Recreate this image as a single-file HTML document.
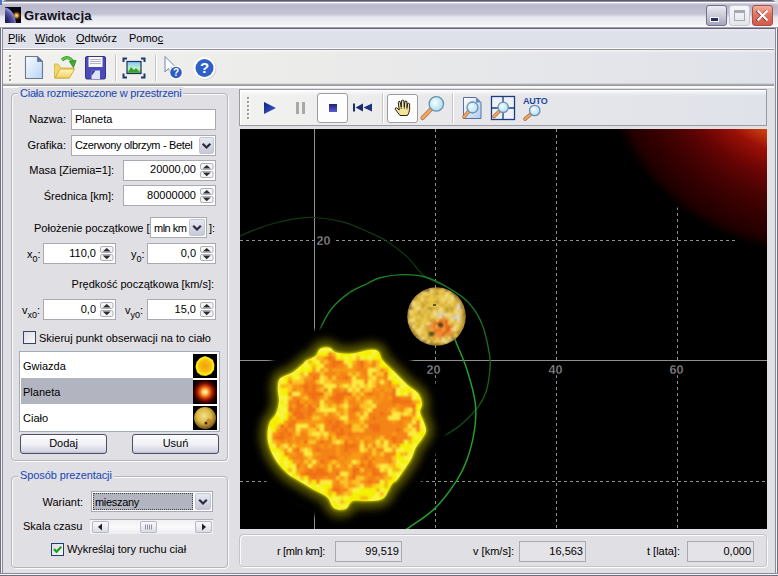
<!DOCTYPE html>
<html><head><meta charset="utf-8">
<style>
*{margin:0;padding:0;box-sizing:border-box}
html,body{width:778px;height:576px;overflow:hidden;background:#e0dfe3}
body{position:relative;font-family:"Liberation Sans",sans-serif;font-size:11px;color:#000}
.a{position:absolute}
.t{position:absolute;white-space:pre;line-height:13px}
u{text-decoration:underline;text-underline-offset:1px}
</style></head><body>

<div class="a" style="left:0;top:0;width:778px;height:29px;border-radius:7px 7px 0 0;background:linear-gradient(#5a5a6a 0,#5a5a6a 1px,#9090a0 1px,#9090a0 2px,#f8f8fc 2px,#f8f8fc 3px,#dcdce6 3px,#b8b8cc 5px,#c4c4d4 14px,#e6e6ee 17px,#f2f2f6 24px,#fafafa 26.5px,#a0a0ae 27.5px,#646474 28px,#646474 29px)"></div>
<svg class="a" style="left:5px;top:7px" width="16" height="16" viewBox="0 0 16 16">
<defs><radialGradient id="tg" cx="11.5" cy="8.5" r="5" gradientUnits="userSpaceOnUse"><stop offset="0" stop-color="#ffe090"/><stop offset="0.35" stop-color="#e09030"/><stop offset="1" stop-color="#100808" stop-opacity="0"/></radialGradient>
<radialGradient id="tp" cx="-6" cy="18" r="18" gradientUnits="userSpaceOnUse"><stop offset="0.5" stop-color="#202058"/><stop offset="0.85" stop-color="#5a5aa8"/><stop offset="1" stop-color="#9090e0"/></radialGradient></defs>
<rect width="16" height="16" fill="#06060e"/><rect width="16" height="16" fill="url(#tg)"/>
<path d="M0 0.5 Q9 2 11 16 L0 16Z" fill="url(#tp)"/></svg>
<div class="a" style="left:0;top:0;width:2px;height:5px;background:#5070c0"></div>
<div class="t" style="left:24px;top:9px;font-size:13px;font-weight:bold;letter-spacing:0.2px;color:#10101a;text-shadow:1px 1px 0 rgba(180,180,200,0.6)">Grawitacja</div>
<div class="a" style="left:706px;top:5px;width:21px;height:21px;border:1px solid #70708a;border-radius:3px;background:linear-gradient(#ececf4,#c4c4d4 60%,#a4a4bc)"></div>
<div class="a" style="left:710px;top:17px;width:9px;height:5px;background:#283060;border:1px solid #f4f4fa"></div>
<div class="a" style="left:729px;top:5px;width:21px;height:21px;border:1px solid #c8c8d2;border-radius:3px;background:linear-gradient(#f6f6fa,#e4e4ec)"></div>
<div class="a" style="left:734px;top:10px;width:11px;height:11px;border:1px solid #a8a8b4;border-top-width:3px"></div>
<div class="a" style="left:752px;top:5px;width:21px;height:21px;border:1px solid #a85048;border-radius:3px;background:linear-gradient(#f4b0a0,#e27462 45%,#d45a48)"></div>
<svg class="a" style="left:752px;top:5px" width="21" height="21" viewBox="0 0 21 21">
<path d="M5.5 5.5 L15.5 15.5 M15.5 5.5 L5.5 15.5" stroke="#602020" stroke-width="2" transform="translate(-0.8,0.2)"/>
<path d="M5.5 5.5 L15.5 15.5 M15.5 5.5 L5.5 15.5" stroke="#fff" stroke-width="2"/></svg>
<div class="a" style="left:3px;top:29px;width:772px;height:20px;background:linear-gradient(#e8e8f2 0,#e2e3ec 2px,#dee1ea 4px,#dee1ea 100%)"></div>
<div class="t" style="left:8px;top:32px;"><u>P</u>lik</div>
<div class="t" style="left:35px;top:32px;"><u>W</u>idok</div>
<div class="t" style="left:76px;top:32px;"><u>O</u>dtwórz</div>
<div class="t" style="left:129px;top:32px;">Pomo<u>c</u></div>
<div class="a" style="left:3px;top:48px;width:771px;height:40px;background:linear-gradient(#fafafa 0,#fafafa 1px,#909096 1px,#909096 2px,rgba(255,255,255,.6) 2px,rgba(255,255,255,0) 5px,rgba(255,255,255,0) 35px,#9a9a9e 37px,#9a9a9e 38px,#fafafa 38px),linear-gradient(90deg,#f2f1ee,#ebebea 40%,#e0e2ea)"></div>
<svg class="a" style="left:9px;top:55px" width="4" height="28" viewBox="0 0 4 28"><defs></defs><rect x="1" y="1" width="2" height="2" fill="#fff"/><rect x="0" y="0" width="2" height="2" fill="#9a9aa0"/><rect x="1" y="5" width="2" height="2" fill="#fff"/><rect x="0" y="4" width="2" height="2" fill="#9a9aa0"/><rect x="1" y="9" width="2" height="2" fill="#fff"/><rect x="0" y="8" width="2" height="2" fill="#9a9aa0"/><rect x="1" y="13" width="2" height="2" fill="#fff"/><rect x="0" y="12" width="2" height="2" fill="#9a9aa0"/><rect x="1" y="17" width="2" height="2" fill="#fff"/><rect x="0" y="16" width="2" height="2" fill="#9a9aa0"/><rect x="1" y="21" width="2" height="2" fill="#fff"/><rect x="0" y="20" width="2" height="2" fill="#9a9aa0"/><rect x="1" y="25" width="2" height="2" fill="#fff"/><rect x="0" y="24" width="2" height="2" fill="#9a9aa0"/></svg>
<svg class="a" style="left:24px;top:55px" width="22" height="26" viewBox="0 0 22 26"><defs><linearGradient id="nd" x1="0" y1="0" x2="1" y2="1"><stop offset="0" stop-color="#fafcff"/><stop offset="1" stop-color="#b8d4f4"/></linearGradient></defs><path d="M1.5 1.5 H13.5 L18.5 6.5 V23.5 H1.5Z" fill="url(#nd)" stroke="#6a7896" stroke-width="1.1"/><path d="M13.5 1.5 V6.5 H18.5Z" fill="#5a70b0" stroke="#5a6a98" stroke-width="0.7"/></svg>
<svg class="a" style="left:53px;top:55px" width="24" height="26" viewBox="0 0 24 26"><defs><linearGradient id="of" x1="0" y1="0" x2="0" y2="1"><stop offset="0" stop-color="#fff6b8"/><stop offset="1" stop-color="#f0d060"/></linearGradient></defs><path d="M1.5 9 L1.5 23 L16 23 L21 13 L8 13 L5 9Z" fill="#f0d868" stroke="#d0b040" stroke-width="0.8"/><path d="M2 23 L7 14 L21.5 14 L16.5 23Z" fill="url(#of)" stroke="#c8a030" stroke-width="0.8"/><path d="M9 5 Q15 -0.5 20 7" fill="none" stroke="#2a8a2a" stroke-width="3.2"/><path d="M9 5 Q15 -0.5 20 7" fill="none" stroke="#60d040" stroke-width="1.8"/><path d="M16.5 6.5 L23 5.5 L20.5 12.5Z" fill="#40b030" stroke="#2a7a2a" stroke-width="0.8"/></svg>
<svg class="a" style="left:85px;top:56px" width="22" height="24" viewBox="0 0 22 24"><defs></defs><path d="M0.5 2 Q0.5 0.5 2 0.5 H19 Q20.5 0.5 20.5 2 V21.5 Q20.5 23 19 23 H2 Q0.5 23 0.5 21.5Z" fill="#4a4ab8" stroke="#34348a" stroke-width="1"/><rect x="3.5" y="1" width="14" height="10" fill="#f8f8fc"/><path d="M5 3.5h11M5 5.5h11M5 7.5h11" stroke="#a0a0c0" stroke-width="0.8"/><rect x="6.5" y="14.5" width="8.5" height="8.5" fill="#e0e4f8"/><path d="M6.5 14.5 h4 L6.5 20Z" fill="#3a3a90"/></svg>
<div class="a" style="left:115px;top:55px;width:2px;height:26px;background:linear-gradient(90deg,#c5c5cb 0,#c5c5cb 1px,#fff 1px)"></div>
<svg class="a" style="left:122px;top:57px" width="24" height="22" viewBox="0 0 24 22"><defs><linearGradient id="fs" x1="0" y1="0" x2="0" y2="1"><stop offset="0" stop-color="#80c8f8"/><stop offset="0.6" stop-color="#c8f0c8"/><stop offset="1" stop-color="#60b840"/></linearGradient></defs><path d="M1.5 5 V1.5 H5 M19 1.5 H22.5 V5 M22.5 16.5 V20.5 H19 M5 20.5 H1.5 V16.5" fill="none" stroke="#1c3a70" stroke-width="2"/><rect x="5" y="4.5" width="14" height="12" fill="url(#fs)" stroke="#1c3060" stroke-width="1.2"/><path d="M6 15.5 L9 10 L12 13 L14 11 L18 15.5Z" fill="#38a030"/></svg>
<div class="a" style="left:155px;top:55px;width:2px;height:26px;background:linear-gradient(90deg,#c5c5cb 0,#c5c5cb 1px,#fff 1px)"></div>
<svg class="a" style="left:163px;top:55px" width="24" height="26" viewBox="0 0 24 26"><defs></defs><path d="M2 1.5 V17 L5.5 13.5 L8.5 20 L11 19 L8 12.5 L13 12.5Z" fill="#fafcff" stroke="#7888a8" stroke-width="1"/><circle cx="13" cy="17.5" r="6.8" fill="#fff"/><circle cx="13" cy="17.5" r="5.8" fill="#2e5cc0"/><text x="13" y="21.3" font-family="Liberation Sans" font-weight="bold" font-size="10" fill="#fff" text-anchor="middle">?</text></svg>
<svg class="a" style="left:192px;top:55px" width="26" height="26" viewBox="0 0 26 26"><defs></defs><circle cx="13.3" cy="13.8" r="11" fill="#b8bcc8" opacity="0.6"/><circle cx="12.5" cy="13" r="11" fill="#fff"/><circle cx="12.5" cy="13" r="9" fill="#2f60c8"/><text x="12.5" y="18.3" font-family="Liberation Sans" font-weight="bold" font-size="15" fill="#fff" text-anchor="middle">?</text></svg>
<div class="a" style="left:0px;top:28px;width:3px;height:548px;background:linear-gradient(90deg,#6f6f80 0,#6f6f80 1px,#f4f4f8 1px,#f4f4f8 2px,#8a8a98 2px)"></div>
<div class="a" style="left:775px;top:28px;width:3px;height:548px;background:linear-gradient(90deg,#8a8a98 0,#8a8a98 1px,#f4f4f8 1px,#f4f4f8 2px,#6f6f80 2px)"></div>
<div class="a" style="left:0px;top:573px;width:778px;height:3px;background:linear-gradient(#8a8a98 0,#8a8a98 1px,#f4f4f8 1px,#f4f4f8 2px,#6f6f80 2px)"></div>
<div class="a" style="left:12px;top:94px;width:217px;height:368px;border:1px solid #fbfbfd;border-radius:4px"></div>
<div class="a" style="left:11px;top:93px;width:217px;height:368px;border:1px solid #b6b4be;border-radius:4px"></div>
<div class="t" style="left:18px;top:87px;padding:0 2px;background:#e0dfe3;color:#1846b4;letter-spacing:-0.24px">Ciała rozmieszczone w przestrzeni</div>
<div class="t" style="right:712px;top:113px;">Nazwa:</div>
<div class="a" style="left:71px;top:109px;width:145px;height:21px;background:#fff;border:1px solid #a9a9b2"></div>
<div class="t" style="left:75px;top:113px;">Planeta</div>
<div class="t" style="right:712px;top:139px;">Grafika:</div>
<div class="a" style="left:71px;top:135px;width:145px;height:21px;background:#fff;border:1px solid #a9a9b2"></div>
<div class="t" style="left:75px;top:139px;letter-spacing:-0.33px">Czerwony olbrzym - Betel</div>
<div class="a" style="left:199px;top:137px;width:15px;height:17px;border:1px solid #c4c6d4;border-radius:2px;background:linear-gradient(#e6e8f2,#c6c8d8)"></div>
<svg class="a" style="left:199px;top:137px" width="15" height="17" viewBox="0 0 15 17"><path d="M3.7 6.7 L7.5 10.5 L11.3 6.7" fill="none" stroke="#2c2c3a" stroke-width="2.2"/></svg>
<div class="t" style="right:664px;top:164px;">Masa [Ziemia=1]:</div>
<div class="a" style="left:123px;top:160px;width:93px;height:21px;background:#fff;border:1px solid #a9a9b2"></div>
<div class="t" style="right:582px;top:163px;">20000,00</div>
<svg class="a" style="left:200px;top:163px" width="14" height="15" viewBox="0 0 14 15"><rect x="0.5" y="0.5" width="12.5" height="6" rx="1.5" fill="#f4f4f6" stroke="#a6a6ae" stroke-width="0.9"/><rect x="0.5" y="8.5" width="12.5" height="6" rx="1.5" fill="#f4f4f6" stroke="#a6a6ae" stroke-width="0.9"/><path d="M2.8 5.6 L6.75 2 L10.7 5.6Z" fill="#2a2a30"/><path d="M2.8 9.6 L6.75 13.2 L10.7 9.6Z" fill="#2a2a30"/></svg>
<div class="t" style="right:664px;top:190px;">Średnica [km]:</div>
<div class="a" style="left:123px;top:185px;width:93px;height:21px;background:#fff;border:1px solid #a9a9b2"></div>
<div class="t" style="right:582px;top:189px;">80000000</div>
<svg class="a" style="left:200px;top:188px" width="14" height="15" viewBox="0 0 14 15"><rect x="0.5" y="0.5" width="12.5" height="6" rx="1.5" fill="#f4f4f6" stroke="#a6a6ae" stroke-width="0.9"/><rect x="0.5" y="8.5" width="12.5" height="6" rx="1.5" fill="#f4f4f6" stroke="#a6a6ae" stroke-width="0.9"/><path d="M2.8 5.6 L6.75 2 L10.7 5.6Z" fill="#2a2a30"/><path d="M2.8 9.6 L6.75 13.2 L10.7 9.6Z" fill="#2a2a30"/></svg>
<div class="t" style="left:34px;top:222px;">Położenie początkowe [</div>
<div class="a" style="left:150px;top:217px;width:57px;height:21px;background:#fff;border:1px solid #a9a9b2"></div>
<div class="t" style="left:154px;top:222px;letter-spacing:-0.5px">mln km</div>
<div class="a" style="left:189px;top:219px;width:16px;height:17px;border:1px solid #c4c6d4;border-radius:2px;background:linear-gradient(#e6e8f2,#c6c8d8)"></div>
<svg class="a" style="left:189px;top:219px" width="16" height="17" viewBox="0 0 16 17"><path d="M4.2 6.7 L8.0 10.5 L11.8 6.7" fill="none" stroke="#2c2c3a" stroke-width="2.2"/></svg>
<div class="t" style="left:209px;top:222px;">]:</div>
<div class="t" style="left:27px;top:248px;">x<sub style="font-size:9px;vertical-align:-4px;line-height:0">0</sub>:</div>
<div class="a" style="left:43px;top:243px;width:73px;height:21px;background:#fff;border:1px solid #a9a9b2"></div>
<div class="t" style="right:682px;top:247px;">110,0</div>
<svg class="a" style="left:100px;top:246px" width="14" height="15" viewBox="0 0 14 15"><rect x="0.5" y="0.5" width="12.5" height="6" rx="1.5" fill="#f4f4f6" stroke="#a6a6ae" stroke-width="0.9"/><rect x="0.5" y="8.5" width="12.5" height="6" rx="1.5" fill="#f4f4f6" stroke="#a6a6ae" stroke-width="0.9"/><path d="M2.8 5.6 L6.75 2 L10.7 5.6Z" fill="#2a2a30"/><path d="M2.8 9.6 L6.75 13.2 L10.7 9.6Z" fill="#2a2a30"/></svg>
<div class="t" style="left:131px;top:248px;">y<sub style="font-size:9px;vertical-align:-4px;line-height:0">0</sub>:</div>
<div class="a" style="left:147px;top:243px;width:69px;height:21px;background:#fff;border:1px solid #a9a9b2"></div>
<div class="t" style="right:582px;top:247px;">0,0</div>
<svg class="a" style="left:200px;top:246px" width="14" height="15" viewBox="0 0 14 15"><rect x="0.5" y="0.5" width="12.5" height="6" rx="1.5" fill="#f4f4f6" stroke="#a6a6ae" stroke-width="0.9"/><rect x="0.5" y="8.5" width="12.5" height="6" rx="1.5" fill="#f4f4f6" stroke="#a6a6ae" stroke-width="0.9"/><path d="M2.8 5.6 L6.75 2 L10.7 5.6Z" fill="#2a2a30"/><path d="M2.8 9.6 L6.75 13.2 L10.7 9.6Z" fill="#2a2a30"/></svg>
<div class="t" style="right:564px;top:278px;">Prędkość początkowa [km/s]:</div>
<div class="t" style="left:22px;top:304px;">v<sub style="font-size:9px;vertical-align:-4px;line-height:0">x0</sub>:</div>
<div class="a" style="left:43px;top:299px;width:73px;height:21px;background:#fff;border:1px solid #a9a9b2"></div>
<div class="t" style="right:682px;top:303px;">0,0</div>
<svg class="a" style="left:100px;top:302px" width="14" height="15" viewBox="0 0 14 15"><rect x="0.5" y="0.5" width="12.5" height="6" rx="1.5" fill="#f4f4f6" stroke="#a6a6ae" stroke-width="0.9"/><rect x="0.5" y="8.5" width="12.5" height="6" rx="1.5" fill="#f4f4f6" stroke="#a6a6ae" stroke-width="0.9"/><path d="M2.8 5.6 L6.75 2 L10.7 5.6Z" fill="#2a2a30"/><path d="M2.8 9.6 L6.75 13.2 L10.7 9.6Z" fill="#2a2a30"/></svg>
<div class="t" style="left:125px;top:304px;">v<sub style="font-size:9px;vertical-align:-4px;line-height:0">y0</sub>:</div>
<div class="a" style="left:147px;top:299px;width:69px;height:21px;background:#fff;border:1px solid #a9a9b2"></div>
<div class="t" style="right:582px;top:303px;">15,0</div>
<svg class="a" style="left:200px;top:302px" width="14" height="15" viewBox="0 0 14 15"><rect x="0.5" y="0.5" width="12.5" height="6" rx="1.5" fill="#f4f4f6" stroke="#a6a6ae" stroke-width="0.9"/><rect x="0.5" y="8.5" width="12.5" height="6" rx="1.5" fill="#f4f4f6" stroke="#a6a6ae" stroke-width="0.9"/><path d="M2.8 5.6 L6.75 2 L10.7 5.6Z" fill="#2a2a30"/><path d="M2.8 9.6 L6.75 13.2 L10.7 9.6Z" fill="#2a2a30"/></svg>
<div class="a" style="left:23px;top:331px;width:13px;height:13px;border:1px solid #3a4660;background:linear-gradient(135deg,#dcdce4,#fafafa)"></div>
<div class="t" style="left:39px;top:332px;">Skieruj punkt obserwacji na to ciało</div>
<div class="a" style="left:19px;top:351px;width:201px;height:81px;background:#fff;border:1px solid #a4acbc"></div>
<div class="a" style="left:21px;top:378px;width:172px;height:26px;background:#b2b4bf"></div>
<div class="t" style="left:23px;top:360px;">Gwiazda</div>
<div class="t" style="left:23px;top:386px;">Planeta</div>
<div class="t" style="left:23px;top:412px;">Ciało</div>
<svg class="a" style="left:193px;top:354px" width="24" height="76" viewBox="0 0 24 76"><defs><radialGradient id="li1" cx="12" cy="12" r="10" gradientUnits="userSpaceOnUse"><stop offset="0" stop-color="#f0a010"/><stop offset="0.6" stop-color="#f8c010"/><stop offset="0.85" stop-color="#ffee20"/><stop offset="1" stop-color="#c8c000"/></radialGradient><radialGradient id="li2" cx="12" cy="38" r="13" gradientUnits="userSpaceOnUse"><stop offset="0" stop-color="#fffce0"/><stop offset="0.18" stop-color="#ffd060"/><stop offset="0.4" stop-color="#e85a10"/><stop offset="0.65" stop-color="#801000"/><stop offset="0.85" stop-color="#300000"/><stop offset="1" stop-color="#080000"/></radialGradient><radialGradient id="li3" cx="11" cy="62" r="12" gradientUnits="userSpaceOnUse"><stop offset="0" stop-color="#f0e090"/><stop offset="0.6" stop-color="#dcb840"/><stop offset="1" stop-color="#806020"/></radialGradient><filter id="lb"><feGaussianBlur stdDeviation="0.6"/></filter></defs><rect x="0" y="0" width="24" height="24" fill="#000"/><path d="M12 2 L16 3.5 L20 6 L21.5 11 L21 16 L18 20 L13 22 L8 21.5 L4 18.5 L2.5 13 L3.5 8 L7 4Z" fill="url(#li1)" filter="url(#lb)"/><rect x="0" y="26" width="24" height="24" fill="url(#li2)"/><rect x="0" y="52" width="24" height="24" fill="#000"/><circle cx="12" cy="64" r="11" fill="url(#li3)"/><circle cx="13" cy="69" r="1.5" fill="#402010"/><circle cx="16" cy="67" r="2.5" fill="#c07030" opacity="0.7"/></svg>
<div class="a" style="left:20px;top:434px;width:87px;height:20px;border:1px solid #4a4e68;border-radius:3px;background:linear-gradient(#fdfdfe,#f0f0f6 50%,#d6d6e4 90%,#b8b8cc)"></div>
<div class="t" style="left:20px;top:437px;width:87px;text-align:center">Dodaj</div>
<div class="a" style="left:132px;top:434px;width:87px;height:20px;border:1px solid #4a4e68;border-radius:3px;background:linear-gradient(#fdfdfe,#f0f0f6 50%,#d6d6e4 90%,#b8b8cc)"></div>
<div class="t" style="left:132px;top:437px;width:87px;text-align:center">Usuń</div>
<div class="a" style="left:12px;top:477px;width:217px;height:92px;border:1px solid #fbfbfd;border-radius:4px"></div>
<div class="a" style="left:11px;top:476px;width:217px;height:92px;border:1px solid #b6b4be;border-radius:4px"></div>
<div class="t" style="left:18px;top:469px;padding:0 2px;background:#e0dfe3;color:#1846b4;letter-spacing:-0.1px">Sposób prezentacji</div>
<div class="t" style="right:695px;top:496px;">Wariant:</div>
<div class="a" style="left:91px;top:491px;width:122px;height:21px;background:#fff;border:1px solid #a9a9b2"></div>
<div class="a" style="left:93px;top:493px;width:100px;height:17px;background:#b2b4bf;border:1px dotted #404048"></div>
<div class="t" style="left:95px;top:496px;letter-spacing:-0.3px">mieszany</div>
<div class="a" style="left:195px;top:493px;width:16px;height:17px;border:1px solid #c4c6d4;border-radius:2px;background:linear-gradient(#e6e8f2,#c6c8d8)"></div>
<svg class="a" style="left:195px;top:493px" width="16" height="17" viewBox="0 0 16 17"><path d="M4.2 6.7 L8.0 10.5 L11.8 6.7" fill="none" stroke="#2c2c3a" stroke-width="2.2"/></svg>
<div class="t" style="left:23px;top:520px;">Skala czasu</div>
<div class="a" style="left:90px;top:519px;width:123px;height:15px;border-top:1px solid #b0b0b8;background:linear-gradient(#f0f0f4,#fafafc 50%,#ececf2)"></div>
<div class="a" style="left:92px;top:521px;width:17px;height:12px;border:1px solid #b8b8c4;border-radius:2px;background:linear-gradient(#fafafc,#dcdce6)"></div>
<div class="a" style="left:195px;top:521px;width:17px;height:12px;border:1px solid #b8b8c4;border-radius:2px;background:linear-gradient(#fafafc,#dcdce6)"></div>
<svg class="a" style="left:92px;top:521px" width="17" height="12"><path d="M6 6 L10 2.5 L10 9.5Z" fill="#202028"/></svg>
<svg class="a" style="left:195px;top:521px" width="17" height="12"><path d="M11 6 L7 2.5 L7 9.5Z" fill="#202028"/></svg>
<div class="a" style="left:140px;top:521px;width:17px;height:12px;border:1px solid #b8b8c4;border-radius:2px;background:linear-gradient(#fafafc,#dcdce6)"></div>
<svg class="a" style="left:140px;top:521px" width="17" height="12"><path d="M5.5 3.5v5M7.5 3.5v5M9.5 3.5v5M11.5 3.5v5" stroke="#9090a0" stroke-width="1"/></svg>
<div class="a" style="left:51px;top:543px;width:13px;height:13px;border:1px solid #1c3f6e;background:linear-gradient(135deg,#dcdce4,#fafafa)"></div>
<svg class="a" style="left:51px;top:543px" width="13" height="13"><path d="M3 6 L5.5 8.8 L10.3 3.8" fill="none" stroke="#21a121" stroke-width="2.2"/></svg>
<div class="t" style="left:67px;top:543px;">Wykreślaj tory ruchu ciał</div>
<div class="a" style="left:239px;top:89px;width:528px;height:37px;border:1px solid #9a9aa2;box-shadow:inset 1px 1px 0 #fff;background:linear-gradient(rgba(255,255,255,.8) 0,rgba(255,255,255,0) 6px),linear-gradient(90deg,#f2f2f0,#e8e8ea 40%,#e0e2ea)"></div>
<svg class="a" style="left:247px;top:97px" width="4" height="24" viewBox="0 0 4 24"><defs></defs><rect x="1" y="1" width="2" height="2" fill="#fff"/><rect x="0" y="0" width="2" height="2" fill="#9a9aa0"/><rect x="1" y="5" width="2" height="2" fill="#fff"/><rect x="0" y="4" width="2" height="2" fill="#9a9aa0"/><rect x="1" y="9" width="2" height="2" fill="#fff"/><rect x="0" y="8" width="2" height="2" fill="#9a9aa0"/><rect x="1" y="13" width="2" height="2" fill="#fff"/><rect x="0" y="12" width="2" height="2" fill="#9a9aa0"/><rect x="1" y="17" width="2" height="2" fill="#fff"/><rect x="0" y="16" width="2" height="2" fill="#9a9aa0"/><rect x="1" y="21" width="2" height="2" fill="#fff"/><rect x="0" y="20" width="2" height="2" fill="#9a9aa0"/></svg>
<svg class="a" style="left:262px;top:100px" width="16" height="16" viewBox="0 0 16 16"><defs><linearGradient id="pl" x1="0" y1="0" x2="1" y2="1"><stop offset="0" stop-color="#102080"/><stop offset="1" stop-color="#4060d0"/></linearGradient></defs><path d="M2 2 L14 8 L2 14Z" fill="url(#pl)"/></svg>
<div class="a" style="left:296px;top:102px;width:3px;height:12px;background:#a8a8a8"></div>
<div class="a" style="left:302px;top:102px;width:3px;height:12px;background:#a8a8a8"></div>
<div class="a" style="left:317px;top:93px;width:31px;height:30px;border:1px solid #9c9ca4;border-radius:3px;background:#fdfdfd"></div>
<div class="a" style="left:329px;top:104px;width:8px;height:8px;background:linear-gradient(#1c2470,#5a5ad8)"></div>
<svg class="a" style="left:352px;top:103px" width="22" height="10" viewBox="0 0 22 10"><defs></defs><rect x="1" y="0.5" width="2" height="8" fill="#1c2c70"/><path d="M3.5 4.5 L11 0.5 V8.5Z" fill="#1c2c70"/><path d="M11.5 4.5 L20 0.5 V8.5Z" fill="#1c3080"/></svg>
<div class="a" style="left:382px;top:93px;width:2px;height:30px;background:linear-gradient(90deg,#c5c5cb 0,#c5c5cb 1px,#fff 1px)"></div>
<div class="a" style="left:387px;top:94px;width:31px;height:29px;border:1px solid #9c9ca4;border-radius:3px;background:#fdfdfd"></div>
<svg class="a" style="left:394px;top:99px" width="18" height="18" viewBox="0 0 18 18"><defs></defs><path d="M6 16.5 L1.2 10.2 Q0.8 8.6 2.6 8.8 L5.2 11 L4.3 3.4 Q4.6 1.9 6 2.4 L7.2 8 L7.6 1.6 Q8.8 0.6 9.9 1.6 L10.3 8 L10.9 2.4 Q12 1.6 13 2.6 L13 8.6 L13.6 4.6 Q14.6 3.9 15.6 4.8 L15.6 10.5 Q15.2 14 13.4 16.5Z" fill="#f6e49a" stroke="#141414" stroke-width="0.95" stroke-linejoin="round"/><path d="M7.2 8 V10 M10.3 8 V10 M13 8.6 V10.5" stroke="#141414" stroke-width="0.7"/></svg>
<svg class="a" style="left:418px;top:94px" width="30" height="28" viewBox="0 0 30 28"><defs><radialGradient id="lg" cx="0.4" cy="0.4" r="0.7"><stop offset="0" stop-color="#f4fcff"/><stop offset="1" stop-color="#a8d8f0"/></radialGradient></defs><path d="M13.8 14.4 L4.5 24" stroke="#b8703a" stroke-width="4.2" stroke-linecap="round"/><path d="M13.8 14.4 L4.5 24" stroke="#f0a868" stroke-width="2.6" stroke-linecap="round"/><circle cx="18.3" cy="9.9" r="7.2" fill="url(#lg)" stroke="#6890b0" stroke-width="1.3"/></svg>
<div class="a" style="left:452px;top:93px;width:2px;height:30px;background:linear-gradient(90deg,#c5c5cb 0,#c5c5cb 1px,#fff 1px)"></div>
<svg class="a" style="left:461px;top:95px" width="24" height="26" viewBox="0 0 24 26"><defs><radialGradient id="lg" cx="0.4" cy="0.4" r="0.7"><stop offset="0" stop-color="#f4fcff"/><stop offset="1" stop-color="#a8d8f0"/></radialGradient><linearGradient id="zp" x1="0" y1="0" x2="1" y2="1"><stop offset="0" stop-color="#fff"/><stop offset="1" stop-color="#b0ccf0"/></linearGradient></defs><path d="M2.5 2.5 H15 L20 7.5 V23.5 H2.5Z" fill="url(#zp)" stroke="#5870a0" stroke-width="1"/><path d="M15 2.5 V7.5 H20Z" fill="#6a80c0"/><path d="M8.1 15.9 L3 22" stroke="#b8703a" stroke-width="3.6" stroke-linecap="round"/><path d="M8.1 15.9 L3 22" stroke="#f0a868" stroke-width="2.0" stroke-linecap="round"/><circle cx="11.5" cy="12.5" r="5.5" fill="url(#lg)" stroke="#6890b0" stroke-width="1.3"/></svg>
<svg class="a" style="left:490px;top:95px" width="26" height="26" viewBox="0 0 26 26"><defs><radialGradient id="lg" cx="0.4" cy="0.4" r="0.7"><stop offset="0" stop-color="#f4fcff"/><stop offset="1" stop-color="#a8d8f0"/></radialGradient></defs><rect x="1.5" y="1.5" width="23" height="23" fill="#eef2f8" stroke="#1c3c80" stroke-width="1.3"/><path d="M13 1.5 V24.5 M1.5 13 H24.5" stroke="#1c3c80" stroke-width="1.3"/><path d="M10.0 15.5 L4 21.5" stroke="#b8703a" stroke-width="3.6" stroke-linecap="round"/><path d="M10.0 15.5 L4 21.5" stroke="#f0a868" stroke-width="2.0" stroke-linecap="round"/><circle cx="13.2" cy="12.3" r="5.2" fill="url(#lg)" stroke="#6890b0" stroke-width="1.3"/></svg>
<div class="t" style="left:523px;top:96px;font-size:9px;font-weight:bold;color:#1c48a0;line-height:10px;letter-spacing:-0.2px">AUTO</div>
<svg class="a" style="left:520px;top:100px" width="24" height="22" viewBox="0 0 24 22"><defs><radialGradient id="lg" cx="0.4" cy="0.4" r="0.7"><stop offset="0" stop-color="#f4fcff"/><stop offset="1" stop-color="#a8d8f0"/></radialGradient></defs><path d="M11.5 13.7 L5 19" stroke="#b8703a" stroke-width="3.6" stroke-linecap="round"/><path d="M11.5 13.7 L5 19" stroke="#f0a868" stroke-width="2.0" stroke-linecap="round"/><circle cx="14.7" cy="10.5" r="5.2" fill="url(#lg)" stroke="#6890b0" stroke-width="1.3"/></svg>
<div class="a" style="left:240px;top:129px;width:527px;height:400px;background:#000;overflow:hidden" id="cv"><svg class="a" style="left:0;top:0" width="527" height="400" viewBox="240 129 527 400">
<defs>
<radialGradient id="rg" cx="810" cy="41" r="213" gradientUnits="userSpaceOnUse"><stop offset="0" stop-color="#ffb040"/><stop offset="0.35" stop-color="#f07a20"/><stop offset="0.46" stop-color="#d04410"/><stop offset="0.55" stop-color="#9a1006"/><stop offset="0.66" stop-color="#680404"/><stop offset="0.76" stop-color="#480202"/><stop offset="0.86" stop-color="#320000"/><stop offset="0.94" stop-color="#220000"/><stop offset="0.978" stop-color="#0c0000"/><stop offset="1" stop-color="#000"/></radialGradient>
<radialGradient id="sg" cx="347" cy="428" r="95" gradientUnits="userSpaceOnUse"><stop offset="0.75" stop-color="#3a3000"/><stop offset="0.87" stop-color="#181400"/><stop offset="1" stop-color="#000" stop-opacity="0"/></radialGradient>
<filter id="bl1" x="-20%" y="-20%" width="140%" height="140%"><feGaussianBlur stdDeviation="1.6"/></filter>
<filter id="bl2" x="-20%" y="-20%" width="140%" height="140%"><feGaussianBlur stdDeviation="1.3"/></filter>
<radialGradient id="pg" cx="428" cy="306" r="34" gradientUnits="userSpaceOnUse"><stop offset="0" stop-color="#e8d890"/><stop offset="0.5" stop-color="#d8b860"/><stop offset="0.85" stop-color="#b08838"/><stop offset="1" stop-color="#705020"/></radialGradient>
<clipPath id="pc"><circle cx="436.5" cy="316.5" r="29.3"/></clipPath>
<filter id="bl4" x="-20%" y="-20%" width="140%" height="140%"><feGaussianBlur stdDeviation="2"/></filter>
<filter id="bl3" x="-30%" y="-30%" width="160%" height="160%"><feGaussianBlur stdDeviation="4"/></filter>
</defs>
<line x1="435.5" y1="129" x2="435.5" y2="529" stroke="#909090" stroke-width="1" stroke-dasharray="3 3"/>
<line x1="556.5" y1="129" x2="556.5" y2="529" stroke="#909090" stroke-width="1" stroke-dasharray="3 3"/>
<line x1="677.5" y1="129" x2="677.5" y2="529" stroke="#909090" stroke-width="1" stroke-dasharray="3 3"/>
<line x1="240" y1="240.5" x2="767" y2="240.5" stroke="#909090" stroke-width="1" stroke-dasharray="3 3"/>
<line x1="240" y1="481.5" x2="767" y2="481.5" stroke="#909090" stroke-width="1" stroke-dasharray="3 3"/>
<line x1="314.5" y1="129" x2="314.5" y2="529" stroke="#909090"/>
<line x1="240" y1="360.5" x2="767" y2="360.5" stroke="#909090"/>
<circle cx="810" cy="41" r="213" fill="url(#rg)" />
<g font-family="Liberation Sans" font-weight="bold" font-size="12.5" fill="#969696" stroke="#000" stroke-width="0.4">
<rect x="316" y="234" width="17" height="12" fill="#000"/>
<text x="316.6" y="244.8">20</text>
<rect x="426" y="363" width="17" height="12" fill="#000"/>
<text x="426.6" y="373.8">20</text>
<rect x="548" y="363" width="17" height="12" fill="#000"/>
<text x="548.6" y="373.8">40</text>
<rect x="669" y="363" width="17" height="12" fill="#000"/>
<text x="669.6" y="373.8">60</text>
</g>
<path d="M230.0 241.0 C231.7 240.2 234.1 238.6 240.0 236.0 C245.9 233.4 257.1 228.5 265.7 225.7 C274.3 222.9 283.3 220.7 291.4 219.3 C299.5 217.9 305.9 217.1 314.5 217.5 C323.1 217.9 333.8 219.5 342.8 221.9 C351.8 224.3 361.2 228.9 368.5 232.1 C375.8 235.3 380.1 237.0 386.5 241.1 C392.9 245.2 400.9 251.0 407.0 256.6 C413.1 262.2 417.5 270.4 423.0 275.0 C428.5 279.6 437.2 282.5 440.0 284.0" fill="none" stroke="#113a13" stroke-width="1.2"/>
<path d="M315.6 341.2 C316.6 338.6 319.0 331.1 321.7 325.6" fill="none" stroke="#1c8426" stroke-width="1.4"/>
<path d="M321.7 325.6 C324.4 320.1 327.4 313.7 332.0 308.2" fill="none" stroke="#1c8426" stroke-width="1.4"/>
<path d="M332.0 308.2 C336.6 302.7 343.6 296.7 349.4 292.6" fill="none" stroke="#1c8426" stroke-width="1.4"/>
<path d="M349.4 292.6 C355.2 288.6 361.7 286.4 366.8 283.9" fill="none" stroke="#1c8426" stroke-width="1.4"/>
<path d="M366.8 283.9 C371.9 281.4 374.1 279.4 380.0 277.8" fill="none" stroke="#1c8426" stroke-width="1.4"/>
<path d="M380.0 277.8 C385.9 276.2 394.5 274.7 402.0 274.6" fill="none" stroke="#1c8426" stroke-width="1.4"/>
<path d="M402.0 274.6 C409.5 274.5 417.5 274.9 425.0 277.0" fill="none" stroke="#1c8426" stroke-width="1.4"/>
<path d="M425.0 277.0 C432.5 279.1 439.8 282.8 447.0 287.0" fill="none" stroke="#1c8024" stroke-width="1.4"/>
<path d="M447.0 287.0 C454.2 291.2 462.2 295.8 468.0 302.0" fill="none" stroke="#1a7a22" stroke-width="1.4"/>
<path d="M468.0 302.0 C473.8 308.2 478.4 315.2 482.0 324.0" fill="none" stroke="#1a7420" stroke-width="1.4"/>
<path d="M482.0 324.0 C485.6 332.8 488.3 347.2 489.6 355.0" fill="none" stroke="#186e20" stroke-width="1.4"/>
<path d="M489.6 355.0 C490.9 362.8 490.4 364.8 489.8 371.0" fill="none" stroke="#18661e" stroke-width="1.4"/>
<path d="M489.8 371.0 C489.2 377.2 487.9 386.1 486.0 392.0" fill="none" stroke="#165e1c" stroke-width="1.4"/>
<path d="M486.0 392.0 C484.1 397.9 482.0 401.7 478.3 406.7" fill="none" stroke="#15561a" stroke-width="1.4"/>
<path d="M478.3 406.7 C474.6 411.7 468.5 417.8 464.0 422.0" fill="none" stroke="#145018" stroke-width="1.4"/>
<path d="M464.0 422.0 C459.5 426.2 456.0 428.7 451.2 431.7" fill="none" stroke="#134a17" stroke-width="1.4"/>
<path d="M451.2 431.7 C446.5 434.7 438.2 438.6 435.6 440.0" fill="none" stroke="#124416" stroke-width="1.4"/>
<path d="M452.0 330.0 C452.7 332.0 453.5 335.4 456.0 342.0 C458.5 348.6 463.7 359.3 466.9 369.4 C470.1 379.5 473.9 392.4 475.2 402.5 C476.5 412.6 475.9 420.4 474.5 430.0 C473.1 439.6 469.9 451.5 466.9 460.0 C463.9 468.5 461.6 473.1 456.4 481.1 C451.1 489.1 443.4 500.1 435.4 507.9 C427.4 515.7 415.3 523.2 408.6 527.9 C401.9 532.6 397.3 534.6 395.0 536.0" fill="none" stroke="#22a02c" stroke-width="1.5"/>
<circle cx="347" cy="428" r="95" fill="url(#sg)"/>
<path d="M303.0 364.0 C305.3 362.0 304.2 361.8 306.3 360.5 C308.4 359.2 313.3 357.9 315.6 356.0 C317.9 354.1 317.7 350.3 320.0 348.9 C322.3 347.5 326.7 347.1 329.4 347.7 C332.1 348.3 332.5 351.4 336.4 352.4 C340.3 353.4 347.2 353.9 352.6 353.5 C358.0 353.1 364.6 350.4 368.8 350.0 C373.0 349.6 375.7 349.4 378.0 351.2 C380.3 352.9 379.9 356.9 382.7 360.5 C385.5 364.1 390.9 368.4 395.0 372.5 C399.1 376.6 403.7 381.5 407.5 385.0 C411.3 388.5 415.6 390.2 418.0 393.3 C420.4 396.4 421.7 400.6 422.0 403.8 C422.3 406.9 419.7 408.9 420.0 412.0 C420.3 415.1 423.0 419.3 424.0 422.5 C425.0 425.7 426.3 428.2 426.0 431.0 C425.7 433.8 423.7 436.2 422.0 439.0 C420.3 441.8 417.5 444.3 415.8 447.5 C414.1 450.7 413.4 454.6 411.7 458.0 C410.0 461.4 407.8 464.3 405.4 468.0 C402.9 471.7 399.2 477.3 397.0 480.0 C394.8 482.7 394.4 480.9 392.0 484.0 C389.6 487.1 386.9 495.9 382.7 498.7 C378.4 501.5 371.5 500.6 366.5 501.0 C361.5 501.4 356.1 499.7 352.6 501.0 C349.1 502.3 348.7 507.8 345.6 509.0 C342.5 510.2 337.1 510.0 334.0 508.0 C330.9 506.0 330.5 500.1 327.0 497.0 C323.5 493.9 317.4 491.8 313.2 489.4 C309.0 487.0 305.9 485.1 301.7 482.5 C297.5 479.9 292.1 477.4 288.0 474.0 C283.9 470.6 280.1 466.4 277.0 462.0 C273.9 457.6 271.2 452.0 269.6 447.5 C268.0 443.0 267.5 439.2 267.5 435.0 C267.5 430.8 268.2 426.0 269.6 422.5 C271.0 419.0 274.2 417.5 275.8 414.0 C277.4 410.5 278.6 405.9 279.0 401.7 C279.4 397.5 277.7 392.8 277.9 389.0 C278.1 385.2 277.6 381.5 280.0 378.8 C282.4 376.0 288.7 375.0 292.5 372.5 C296.3 370.0 300.7 366.0 303.0 364.0Z" fill="#000" stroke="#000" stroke-width="40" stroke-linejoin="round" filter="url(#bl1)"/>
<path d="M303.0 364.0 C305.3 362.0 304.2 361.8 306.3 360.5 C308.4 359.2 313.3 357.9 315.6 356.0 C317.9 354.1 317.7 350.3 320.0 348.9 C322.3 347.5 326.7 347.1 329.4 347.7 C332.1 348.3 332.5 351.4 336.4 352.4 C340.3 353.4 347.2 353.9 352.6 353.5 C358.0 353.1 364.6 350.4 368.8 350.0 C373.0 349.6 375.7 349.4 378.0 351.2 C380.3 352.9 379.9 356.9 382.7 360.5 C385.5 364.1 390.9 368.4 395.0 372.5 C399.1 376.6 403.7 381.5 407.5 385.0 C411.3 388.5 415.6 390.2 418.0 393.3 C420.4 396.4 421.7 400.6 422.0 403.8 C422.3 406.9 419.7 408.9 420.0 412.0 C420.3 415.1 423.0 419.3 424.0 422.5 C425.0 425.7 426.3 428.2 426.0 431.0 C425.7 433.8 423.7 436.2 422.0 439.0 C420.3 441.8 417.5 444.3 415.8 447.5 C414.1 450.7 413.4 454.6 411.7 458.0 C410.0 461.4 407.8 464.3 405.4 468.0 C402.9 471.7 399.2 477.3 397.0 480.0 C394.8 482.7 394.4 480.9 392.0 484.0 C389.6 487.1 386.9 495.9 382.7 498.7 C378.4 501.5 371.5 500.6 366.5 501.0 C361.5 501.4 356.1 499.7 352.6 501.0 C349.1 502.3 348.7 507.8 345.6 509.0 C342.5 510.2 337.1 510.0 334.0 508.0 C330.9 506.0 330.5 500.1 327.0 497.0 C323.5 493.9 317.4 491.8 313.2 489.4 C309.0 487.0 305.9 485.1 301.7 482.5 C297.5 479.9 292.1 477.4 288.0 474.0 C283.9 470.6 280.1 466.4 277.0 462.0 C273.9 457.6 271.2 452.0 269.6 447.5 C268.0 443.0 267.5 439.2 267.5 435.0 C267.5 430.8 268.2 426.0 269.6 422.5 C271.0 419.0 274.2 417.5 275.8 414.0 C277.4 410.5 278.6 405.9 279.0 401.7 C279.4 397.5 277.7 392.8 277.9 389.0 C278.1 385.2 277.6 381.5 280.0 378.8 C282.4 376.0 288.7 375.0 292.5 372.5 C296.3 370.0 300.7 366.0 303.0 364.0Z" fill="none" stroke="#4a4600" stroke-width="16" filter="url(#bl3)"/>
<path d="M303.0 364.0 C305.3 362.0 304.2 361.8 306.3 360.5 C308.4 359.2 313.3 357.9 315.6 356.0 C317.9 354.1 317.7 350.3 320.0 348.9 C322.3 347.5 326.7 347.1 329.4 347.7 C332.1 348.3 332.5 351.4 336.4 352.4 C340.3 353.4 347.2 353.9 352.6 353.5 C358.0 353.1 364.6 350.4 368.8 350.0 C373.0 349.6 375.7 349.4 378.0 351.2 C380.3 352.9 379.9 356.9 382.7 360.5 C385.5 364.1 390.9 368.4 395.0 372.5 C399.1 376.6 403.7 381.5 407.5 385.0 C411.3 388.5 415.6 390.2 418.0 393.3 C420.4 396.4 421.7 400.6 422.0 403.8 C422.3 406.9 419.7 408.9 420.0 412.0 C420.3 415.1 423.0 419.3 424.0 422.5 C425.0 425.7 426.3 428.2 426.0 431.0 C425.7 433.8 423.7 436.2 422.0 439.0 C420.3 441.8 417.5 444.3 415.8 447.5 C414.1 450.7 413.4 454.6 411.7 458.0 C410.0 461.4 407.8 464.3 405.4 468.0 C402.9 471.7 399.2 477.3 397.0 480.0 C394.8 482.7 394.4 480.9 392.0 484.0 C389.6 487.1 386.9 495.9 382.7 498.7 C378.4 501.5 371.5 500.6 366.5 501.0 C361.5 501.4 356.1 499.7 352.6 501.0 C349.1 502.3 348.7 507.8 345.6 509.0 C342.5 510.2 337.1 510.0 334.0 508.0 C330.9 506.0 330.5 500.1 327.0 497.0 C323.5 493.9 317.4 491.8 313.2 489.4 C309.0 487.0 305.9 485.1 301.7 482.5 C297.5 479.9 292.1 477.4 288.0 474.0 C283.9 470.6 280.1 466.4 277.0 462.0 C273.9 457.6 271.2 452.0 269.6 447.5 C268.0 443.0 267.5 439.2 267.5 435.0 C267.5 430.8 268.2 426.0 269.6 422.5 C271.0 419.0 274.2 417.5 275.8 414.0 C277.4 410.5 278.6 405.9 279.0 401.7 C279.4 397.5 277.7 392.8 277.9 389.0 C278.1 385.2 277.6 381.5 280.0 378.8 C282.4 376.0 288.7 375.0 292.5 372.5 C296.3 370.0 300.7 366.0 303.0 364.0Z" fill="none" stroke="#707000" stroke-width="6" filter="url(#bl3)" opacity="0.6"/>
<path d="M303.0 364.0 C305.3 362.0 304.2 361.8 306.3 360.5 C308.4 359.2 313.3 357.9 315.6 356.0 C317.9 354.1 317.7 350.3 320.0 348.9 C322.3 347.5 326.7 347.1 329.4 347.7 C332.1 348.3 332.5 351.4 336.4 352.4 C340.3 353.4 347.2 353.9 352.6 353.5 C358.0 353.1 364.6 350.4 368.8 350.0 C373.0 349.6 375.7 349.4 378.0 351.2 C380.3 352.9 379.9 356.9 382.7 360.5 C385.5 364.1 390.9 368.4 395.0 372.5 C399.1 376.6 403.7 381.5 407.5 385.0 C411.3 388.5 415.6 390.2 418.0 393.3 C420.4 396.4 421.7 400.6 422.0 403.8 C422.3 406.9 419.7 408.9 420.0 412.0 C420.3 415.1 423.0 419.3 424.0 422.5 C425.0 425.7 426.3 428.2 426.0 431.0 C425.7 433.8 423.7 436.2 422.0 439.0 C420.3 441.8 417.5 444.3 415.8 447.5 C414.1 450.7 413.4 454.6 411.7 458.0 C410.0 461.4 407.8 464.3 405.4 468.0 C402.9 471.7 399.2 477.3 397.0 480.0 C394.8 482.7 394.4 480.9 392.0 484.0 C389.6 487.1 386.9 495.9 382.7 498.7 C378.4 501.5 371.5 500.6 366.5 501.0 C361.5 501.4 356.1 499.7 352.6 501.0 C349.1 502.3 348.7 507.8 345.6 509.0 C342.5 510.2 337.1 510.0 334.0 508.0 C330.9 506.0 330.5 500.1 327.0 497.0 C323.5 493.9 317.4 491.8 313.2 489.4 C309.0 487.0 305.9 485.1 301.7 482.5 C297.5 479.9 292.1 477.4 288.0 474.0 C283.9 470.6 280.1 466.4 277.0 462.0 C273.9 457.6 271.2 452.0 269.6 447.5 C268.0 443.0 267.5 439.2 267.5 435.0 C267.5 430.8 268.2 426.0 269.6 422.5 C271.0 419.0 274.2 417.5 275.8 414.0 C277.4 410.5 278.6 405.9 279.0 401.7 C279.4 397.5 277.7 392.8 277.9 389.0 C278.1 385.2 277.6 381.5 280.0 378.8 C282.4 376.0 288.7 375.0 292.5 372.5 C296.3 370.0 300.7 366.0 303.0 364.0Z" fill="#ecea00" stroke="#c8c400" stroke-width="1.5" filter="url(#bl1)"/>
<clipPath id="sc"><path d="M303.0 364.0 C305.3 362.0 304.2 361.8 306.3 360.5 C308.4 359.2 313.3 357.9 315.6 356.0 C317.9 354.1 317.7 350.3 320.0 348.9 C322.3 347.5 326.7 347.1 329.4 347.7 C332.1 348.3 332.5 351.4 336.4 352.4 C340.3 353.4 347.2 353.9 352.6 353.5 C358.0 353.1 364.6 350.4 368.8 350.0 C373.0 349.6 375.7 349.4 378.0 351.2 C380.3 352.9 379.9 356.9 382.7 360.5 C385.5 364.1 390.9 368.4 395.0 372.5 C399.1 376.6 403.7 381.5 407.5 385.0 C411.3 388.5 415.6 390.2 418.0 393.3 C420.4 396.4 421.7 400.6 422.0 403.8 C422.3 406.9 419.7 408.9 420.0 412.0 C420.3 415.1 423.0 419.3 424.0 422.5 C425.0 425.7 426.3 428.2 426.0 431.0 C425.7 433.8 423.7 436.2 422.0 439.0 C420.3 441.8 417.5 444.3 415.8 447.5 C414.1 450.7 413.4 454.6 411.7 458.0 C410.0 461.4 407.8 464.3 405.4 468.0 C402.9 471.7 399.2 477.3 397.0 480.0 C394.8 482.7 394.4 480.9 392.0 484.0 C389.6 487.1 386.9 495.9 382.7 498.7 C378.4 501.5 371.5 500.6 366.5 501.0 C361.5 501.4 356.1 499.7 352.6 501.0 C349.1 502.3 348.7 507.8 345.6 509.0 C342.5 510.2 337.1 510.0 334.0 508.0 C330.9 506.0 330.5 500.1 327.0 497.0 C323.5 493.9 317.4 491.8 313.2 489.4 C309.0 487.0 305.9 485.1 301.7 482.5 C297.5 479.9 292.1 477.4 288.0 474.0 C283.9 470.6 280.1 466.4 277.0 462.0 C273.9 457.6 271.2 452.0 269.6 447.5 C268.0 443.0 267.5 439.2 267.5 435.0 C267.5 430.8 268.2 426.0 269.6 422.5 C271.0 419.0 274.2 417.5 275.8 414.0 C277.4 410.5 278.6 405.9 279.0 401.7 C279.4 397.5 277.7 392.8 277.9 389.0 C278.1 385.2 277.6 381.5 280.0 378.8 C282.4 376.0 288.7 375.0 292.5 372.5 C296.3 370.0 300.7 366.0 303.0 364.0Z"/></clipPath>
<g clip-path="url(#sc)"><g filter="url(#bl2)">
<path fill="#f4f000" d="M320 344h4v4h-4zM324 344h4v4h-4zM328 344h4v4h-4zM336 348h4v4h-4zM340 348h4v4h-4zM344 348h4v4h-4zM356 348h4v4h-4zM364 348h4v4h-4zM368 348h4v4h-4zM376 348h4v4h-4zM316 352h4v4h-4zM320 352h4v4h-4zM324 352h4v4h-4zM340 352h4v4h-4zM344 352h4v4h-4zM348 352h4v4h-4zM356 352h4v4h-4zM360 352h4v4h-4zM364 352h4v4h-4zM368 352h4v4h-4zM376 352h4v4h-4zM380 352h4v4h-4zM304 356h4v4h-4zM308 356h4v4h-4zM336 356h4v4h-4zM340 356h4v4h-4zM348 356h4v4h-4zM364 356h4v4h-4zM372 356h4v4h-4zM376 356h4v4h-4zM380 356h4v4h-4zM312 360h4v4h-4zM348 360h4v4h-4zM380 360h4v4h-4zM300 364h4v4h-4zM308 364h4v4h-4zM316 364h4v4h-4zM380 364h4v4h-4zM384 364h4v4h-4zM388 364h4v4h-4zM292 368h4v4h-4zM300 368h4v4h-4zM304 368h4v4h-4zM308 368h4v4h-4zM388 368h4v4h-4zM296 372h4v4h-4zM388 372h4v4h-4zM284 376h4v4h-4zM292 376h4v4h-4zM392 376h4v4h-4zM276 380h4v4h-4zM284 380h4v4h-4zM392 380h4v4h-4zM396 380h4v4h-4zM408 384h4v4h-4zM280 388h4v4h-4zM284 388h4v4h-4zM400 388h4v4h-4zM404 388h4v4h-4zM408 388h4v4h-4zM416 388h4v4h-4zM280 392h4v4h-4zM284 392h4v4h-4zM400 392h4v4h-4zM416 396h4v4h-4zM280 400h4v4h-4zM420 400h4v4h-4zM284 404h4v4h-4zM416 404h4v4h-4zM276 408h4v4h-4zM416 408h4v4h-4zM272 412h4v4h-4zM284 412h4v4h-4zM420 412h4v4h-4zM268 416h4v4h-4zM272 416h4v4h-4zM276 416h4v4h-4zM284 416h4v4h-4zM416 416h4v4h-4zM420 416h4v4h-4zM268 420h4v4h-4zM272 420h4v4h-4zM276 420h4v4h-4zM280 420h4v4h-4zM264 424h4v4h-4zM268 424h4v4h-4zM272 424h4v4h-4zM264 428h4v4h-4zM272 428h4v4h-4zM420 428h4v4h-4zM264 432h4v4h-4zM416 432h4v4h-4zM420 432h4v4h-4zM424 432h4v4h-4zM264 436h4v4h-4zM412 436h4v4h-4zM420 436h4v4h-4zM264 440h4v4h-4zM412 440h4v4h-4zM416 440h4v4h-4zM420 440h4v4h-4zM268 444h4v4h-4zM400 444h4v4h-4zM404 444h4v4h-4zM408 444h4v4h-4zM268 448h4v4h-4zM272 448h4v4h-4zM276 448h4v4h-4zM404 448h4v4h-4zM408 448h4v4h-4zM416 448h4v4h-4zM280 452h4v4h-4zM396 452h4v4h-4zM412 452h4v4h-4zM280 456h4v4h-4zM284 456h4v4h-4zM396 456h4v4h-4zM400 456h4v4h-4zM280 460h4v4h-4zM288 460h4v4h-4zM400 460h4v4h-4zM404 460h4v4h-4zM408 460h4v4h-4zM276 464h4v4h-4zM280 464h4v4h-4zM288 464h4v4h-4zM396 464h4v4h-4zM408 464h4v4h-4zM280 468h4v4h-4zM284 468h4v4h-4zM400 468h4v4h-4zM284 472h4v4h-4zM292 472h4v4h-4zM392 472h4v4h-4zM288 476h4v4h-4zM292 476h4v4h-4zM304 476h4v4h-4zM392 476h4v4h-4zM296 480h4v4h-4zM312 480h4v4h-4zM388 480h4v4h-4zM392 480h4v4h-4zM396 480h4v4h-4zM312 484h4v4h-4zM320 484h4v4h-4zM324 484h4v4h-4zM328 484h4v4h-4zM376 484h4v4h-4zM380 484h4v4h-4zM388 484h4v4h-4zM308 488h4v4h-4zM312 488h4v4h-4zM316 488h4v4h-4zM324 488h4v4h-4zM360 488h4v4h-4zM364 488h4v4h-4zM368 488h4v4h-4zM372 488h4v4h-4zM384 488h4v4h-4zM388 488h4v4h-4zM316 492h4v4h-4zM320 492h4v4h-4zM324 492h4v4h-4zM332 492h4v4h-4zM352 492h4v4h-4zM356 492h4v4h-4zM360 492h4v4h-4zM364 492h4v4h-4zM368 492h4v4h-4zM372 492h4v4h-4zM320 496h4v4h-4zM328 496h4v4h-4zM340 496h4v4h-4zM348 496h4v4h-4zM352 496h4v4h-4zM356 496h4v4h-4zM368 496h4v4h-4zM380 496h4v4h-4zM332 500h4v4h-4zM344 500h4v4h-4zM348 500h4v4h-4zM352 500h4v4h-4zM356 500h4v4h-4zM360 500h4v4h-4zM364 500h4v4h-4zM332 504h4v4h-4zM336 504h4v4h-4zM348 504h4v4h-4zM340 508h4v4h-4zM344 508h4v4h-4z"/>
<path fill="#f8f440" d="M316 348h4v4h-4zM320 348h4v4h-4zM324 348h4v4h-4zM328 348h4v4h-4zM332 348h4v4h-4zM360 348h4v4h-4zM372 348h4v4h-4zM312 352h4v4h-4zM336 352h4v4h-4zM352 352h4v4h-4zM372 352h4v4h-4zM312 356h4v4h-4zM344 356h4v4h-4zM352 356h4v4h-4zM360 356h4v4h-4zM368 356h4v4h-4zM300 360h4v4h-4zM304 360h4v4h-4zM316 360h4v4h-4zM384 360h4v4h-4zM296 364h4v4h-4zM304 364h4v4h-4zM296 368h4v4h-4zM392 368h4v4h-4zM284 372h4v4h-4zM288 372h4v4h-4zM292 372h4v4h-4zM304 372h4v4h-4zM392 372h4v4h-4zM396 372h4v4h-4zM276 376h4v4h-4zM280 376h4v4h-4zM296 376h4v4h-4zM388 376h4v4h-4zM396 376h4v4h-4zM400 376h4v4h-4zM280 380h4v4h-4zM400 380h4v4h-4zM404 380h4v4h-4zM276 384h4v4h-4zM400 384h4v4h-4zM404 384h4v4h-4zM276 388h4v4h-4zM396 388h4v4h-4zM412 388h4v4h-4zM276 392h4v4h-4zM396 392h4v4h-4zM404 392h4v4h-4zM412 392h4v4h-4zM416 392h4v4h-4zM276 396h4v4h-4zM280 396h4v4h-4zM284 396h4v4h-4zM412 396h4v4h-4zM420 396h4v4h-4zM276 400h4v4h-4zM284 400h4v4h-4zM276 404h4v4h-4zM280 404h4v4h-4zM420 404h4v4h-4zM272 408h4v4h-4zM280 408h4v4h-4zM284 408h4v4h-4zM420 408h4v4h-4zM276 412h4v4h-4zM280 412h4v4h-4zM416 412h4v4h-4zM280 416h4v4h-4zM420 420h4v4h-4zM424 420h4v4h-4zM420 424h4v4h-4zM424 424h4v4h-4zM268 428h4v4h-4zM424 428h4v4h-4zM268 432h4v4h-4zM268 436h4v4h-4zM416 436h4v4h-4zM268 440h4v4h-4zM404 440h4v4h-4zM272 444h4v4h-4zM412 444h4v4h-4zM416 444h4v4h-4zM400 448h4v4h-4zM412 448h4v4h-4zM268 452h4v4h-4zM272 452h4v4h-4zM276 452h4v4h-4zM408 452h4v4h-4zM272 456h4v4h-4zM276 456h4v4h-4zM404 456h4v4h-4zM408 456h4v4h-4zM412 456h4v4h-4zM272 460h4v4h-4zM276 460h4v4h-4zM284 460h4v4h-4zM396 460h4v4h-4zM284 464h4v4h-4zM292 464h4v4h-4zM400 464h4v4h-4zM404 464h4v4h-4zM292 468h4v4h-4zM388 468h4v4h-4zM404 468h4v4h-4zM288 472h4v4h-4zM388 472h4v4h-4zM396 472h4v4h-4zM400 472h4v4h-4zM296 476h4v4h-4zM396 476h4v4h-4zM400 476h4v4h-4zM300 480h4v4h-4zM304 480h4v4h-4zM380 480h4v4h-4zM300 484h4v4h-4zM304 484h4v4h-4zM308 484h4v4h-4zM316 484h4v4h-4zM392 484h4v4h-4zM320 488h4v4h-4zM352 488h4v4h-4zM356 488h4v4h-4zM380 488h4v4h-4zM376 492h4v4h-4zM384 492h4v4h-4zM324 496h4v4h-4zM332 496h4v4h-4zM336 496h4v4h-4zM344 496h4v4h-4zM372 496h4v4h-4zM376 496h4v4h-4zM384 496h4v4h-4zM328 500h4v4h-4zM336 500h4v4h-4zM368 500h4v4h-4zM372 500h4v4h-4zM376 500h4v4h-4zM328 504h4v4h-4zM340 504h4v4h-4zM344 504h4v4h-4zM332 508h4v4h-4zM336 508h4v4h-4z"/>
<path fill="#f48414" d="M328 352h4v4h-4zM324 356h4v4h-4zM332 356h4v4h-4zM328 360h4v4h-4zM340 360h4v4h-4zM356 360h4v4h-4zM372 360h4v4h-4zM324 364h4v4h-4zM328 364h4v4h-4zM336 364h4v4h-4zM340 364h4v4h-4zM356 364h4v4h-4zM372 364h4v4h-4zM328 368h4v4h-4zM356 368h4v4h-4zM360 368h4v4h-4zM364 368h4v4h-4zM380 368h4v4h-4zM308 372h4v4h-4zM312 372h4v4h-4zM316 372h4v4h-4zM324 372h4v4h-4zM328 372h4v4h-4zM332 372h4v4h-4zM340 372h4v4h-4zM344 372h4v4h-4zM360 372h4v4h-4zM364 372h4v4h-4zM316 376h4v4h-4zM328 376h4v4h-4zM336 376h4v4h-4zM340 376h4v4h-4zM348 376h4v4h-4zM364 376h4v4h-4zM384 376h4v4h-4zM288 380h4v4h-4zM304 380h4v4h-4zM308 380h4v4h-4zM312 380h4v4h-4zM364 380h4v4h-4zM388 380h4v4h-4zM300 384h4v4h-4zM308 384h4v4h-4zM316 384h4v4h-4zM376 384h4v4h-4zM388 384h4v4h-4zM292 388h4v4h-4zM308 388h4v4h-4zM324 388h4v4h-4zM332 388h4v4h-4zM336 388h4v4h-4zM344 388h4v4h-4zM360 388h4v4h-4zM372 388h4v4h-4zM380 388h4v4h-4zM288 392h4v4h-4zM304 392h4v4h-4zM332 392h4v4h-4zM364 392h4v4h-4zM372 392h4v4h-4zM376 392h4v4h-4zM384 392h4v4h-4zM388 392h4v4h-4zM292 396h4v4h-4zM296 396h4v4h-4zM308 396h4v4h-4zM316 396h4v4h-4zM328 396h4v4h-4zM352 396h4v4h-4zM360 396h4v4h-4zM376 396h4v4h-4zM384 396h4v4h-4zM400 396h4v4h-4zM404 396h4v4h-4zM408 396h4v4h-4zM288 400h4v4h-4zM292 400h4v4h-4zM304 400h4v4h-4zM312 400h4v4h-4zM316 400h4v4h-4zM332 400h4v4h-4zM340 400h4v4h-4zM348 400h4v4h-4zM352 400h4v4h-4zM380 400h4v4h-4zM384 400h4v4h-4zM388 400h4v4h-4zM288 404h4v4h-4zM316 404h4v4h-4zM352 404h4v4h-4zM356 404h4v4h-4zM376 404h4v4h-4zM380 404h4v4h-4zM384 404h4v4h-4zM388 404h4v4h-4zM392 404h4v4h-4zM400 404h4v4h-4zM404 404h4v4h-4zM408 404h4v4h-4zM292 408h4v4h-4zM300 408h4v4h-4zM304 408h4v4h-4zM348 408h4v4h-4zM372 408h4v4h-4zM376 408h4v4h-4zM380 408h4v4h-4zM384 408h4v4h-4zM400 408h4v4h-4zM412 408h4v4h-4zM304 412h4v4h-4zM328 412h4v4h-4zM348 412h4v4h-4zM352 412h4v4h-4zM368 412h4v4h-4zM372 412h4v4h-4zM376 412h4v4h-4zM384 412h4v4h-4zM388 412h4v4h-4zM412 412h4v4h-4zM288 416h4v4h-4zM304 416h4v4h-4zM308 416h4v4h-4zM324 416h4v4h-4zM328 416h4v4h-4zM332 416h4v4h-4zM348 416h4v4h-4zM352 416h4v4h-4zM368 416h4v4h-4zM376 416h4v4h-4zM380 416h4v4h-4zM384 416h4v4h-4zM400 416h4v4h-4zM404 416h4v4h-4zM408 416h4v4h-4zM288 420h4v4h-4zM324 420h4v4h-4zM332 420h4v4h-4zM340 420h4v4h-4zM364 420h4v4h-4zM368 420h4v4h-4zM372 420h4v4h-4zM376 420h4v4h-4zM380 420h4v4h-4zM384 420h4v4h-4zM388 420h4v4h-4zM396 420h4v4h-4zM400 420h4v4h-4zM416 420h4v4h-4zM292 424h4v4h-4zM312 424h4v4h-4zM324 424h4v4h-4zM328 424h4v4h-4zM340 424h4v4h-4zM344 424h4v4h-4zM380 424h4v4h-4zM384 424h4v4h-4zM388 424h4v4h-4zM392 424h4v4h-4zM396 424h4v4h-4zM400 424h4v4h-4zM416 424h4v4h-4zM280 428h4v4h-4zM292 428h4v4h-4zM324 428h4v4h-4zM328 428h4v4h-4zM336 428h4v4h-4zM344 428h4v4h-4zM348 428h4v4h-4zM364 428h4v4h-4zM368 428h4v4h-4zM380 428h4v4h-4zM384 428h4v4h-4zM388 428h4v4h-4zM392 428h4v4h-4zM400 428h4v4h-4zM416 428h4v4h-4zM276 432h4v4h-4zM284 432h4v4h-4zM300 432h4v4h-4zM304 432h4v4h-4zM344 432h4v4h-4zM352 432h4v4h-4zM356 432h4v4h-4zM360 432h4v4h-4zM364 432h4v4h-4zM368 432h4v4h-4zM372 432h4v4h-4zM376 432h4v4h-4zM380 432h4v4h-4zM384 432h4v4h-4zM388 432h4v4h-4zM396 432h4v4h-4zM400 432h4v4h-4zM404 432h4v4h-4zM272 436h4v4h-4zM284 436h4v4h-4zM288 436h4v4h-4zM296 436h4v4h-4zM300 436h4v4h-4zM304 436h4v4h-4zM328 436h4v4h-4zM336 436h4v4h-4zM348 436h4v4h-4zM352 436h4v4h-4zM360 436h4v4h-4zM372 436h4v4h-4zM384 436h4v4h-4zM388 436h4v4h-4zM396 436h4v4h-4zM400 436h4v4h-4zM404 436h4v4h-4zM280 440h4v4h-4zM288 440h4v4h-4zM296 440h4v4h-4zM316 440h4v4h-4zM324 440h4v4h-4zM328 440h4v4h-4zM352 440h4v4h-4zM356 440h4v4h-4zM364 440h4v4h-4zM396 440h4v4h-4zM400 440h4v4h-4zM312 444h4v4h-4zM316 444h4v4h-4zM324 444h4v4h-4zM332 444h4v4h-4zM340 444h4v4h-4zM356 444h4v4h-4zM364 444h4v4h-4zM372 444h4v4h-4zM292 448h4v4h-4zM312 448h4v4h-4zM320 448h4v4h-4zM324 448h4v4h-4zM328 448h4v4h-4zM332 448h4v4h-4zM340 448h4v4h-4zM348 448h4v4h-4zM352 448h4v4h-4zM356 448h4v4h-4zM368 448h4v4h-4zM376 448h4v4h-4zM380 448h4v4h-4zM284 452h4v4h-4zM296 452h4v4h-4zM300 452h4v4h-4zM320 452h4v4h-4zM324 452h4v4h-4zM328 452h4v4h-4zM332 452h4v4h-4zM340 452h4v4h-4zM344 452h4v4h-4zM348 452h4v4h-4zM364 452h4v4h-4zM368 452h4v4h-4zM384 452h4v4h-4zM388 452h4v4h-4zM392 452h4v4h-4zM292 456h4v4h-4zM296 456h4v4h-4zM300 456h4v4h-4zM316 456h4v4h-4zM320 456h4v4h-4zM324 456h4v4h-4zM336 456h4v4h-4zM344 456h4v4h-4zM360 456h4v4h-4zM372 456h4v4h-4zM384 456h4v4h-4zM388 456h4v4h-4zM300 460h4v4h-4zM324 460h4v4h-4zM340 460h4v4h-4zM360 460h4v4h-4zM388 460h4v4h-4zM304 464h4v4h-4zM316 464h4v4h-4zM324 464h4v4h-4zM332 464h4v4h-4zM344 464h4v4h-4zM352 464h4v4h-4zM364 464h4v4h-4zM372 464h4v4h-4zM304 468h4v4h-4zM312 468h4v4h-4zM324 468h4v4h-4zM332 468h4v4h-4zM336 468h4v4h-4zM364 468h4v4h-4zM368 468h4v4h-4zM376 468h4v4h-4zM300 472h4v4h-4zM328 472h4v4h-4zM332 472h4v4h-4zM356 472h4v4h-4zM360 472h4v4h-4zM364 472h4v4h-4zM380 472h4v4h-4zM308 476h4v4h-4zM316 476h4v4h-4zM320 476h4v4h-4zM328 476h4v4h-4zM332 476h4v4h-4zM348 476h4v4h-4zM368 476h4v4h-4zM372 476h4v4h-4zM380 476h4v4h-4zM316 480h4v4h-4zM336 480h4v4h-4zM364 480h4v4h-4zM372 480h4v4h-4zM376 480h4v4h-4zM332 484h4v4h-4zM336 484h4v4h-4zM340 488h4v4h-4zM344 488h4v4h-4zM336 492h4v4h-4z"/>
<path fill="#f8b818" d="M332 352h4v4h-4zM316 356h4v4h-4zM320 356h4v4h-4zM356 356h4v4h-4zM308 360h4v4h-4zM352 360h4v4h-4zM376 360h4v4h-4zM312 364h4v4h-4zM384 368h4v4h-4zM300 372h4v4h-4zM288 376h4v4h-4zM280 384h4v4h-4zM284 384h4v4h-4zM392 384h4v4h-4zM396 384h4v4h-4zM408 392h4v4h-4zM416 400h4v4h-4zM288 412h4v4h-4zM272 440h4v4h-4zM408 440h4v4h-4zM400 452h4v4h-4zM404 452h4v4h-4zM392 460h4v4h-4zM392 464h4v4h-4zM288 468h4v4h-4zM392 468h4v4h-4zM396 468h4v4h-4zM296 472h4v4h-4zM300 476h4v4h-4zM384 476h4v4h-4zM388 476h4v4h-4zM308 480h4v4h-4zM384 480h4v4h-4zM384 484h4v4h-4zM328 488h4v4h-4zM376 488h4v4h-4zM328 492h4v4h-4zM348 492h4v4h-4zM380 492h4v4h-4zM360 496h4v4h-4zM364 496h4v4h-4zM340 500h4v4h-4z"/>
<path fill="#f07018" d="M328 356h4v4h-4zM332 360h4v4h-4zM336 360h4v4h-4zM360 360h4v4h-4zM332 364h4v4h-4zM360 364h4v4h-4zM384 372h4v4h-4zM312 376h4v4h-4zM344 376h4v4h-4zM304 384h4v4h-4zM312 384h4v4h-4zM304 388h4v4h-4zM312 388h4v4h-4zM392 388h4v4h-4zM308 392h4v4h-4zM312 392h4v4h-4zM316 392h4v4h-4zM320 392h4v4h-4zM336 392h4v4h-4zM340 392h4v4h-4zM344 392h4v4h-4zM348 392h4v4h-4zM368 392h4v4h-4zM392 392h4v4h-4zM312 396h4v4h-4zM332 396h4v4h-4zM336 396h4v4h-4zM340 396h4v4h-4zM392 396h4v4h-4zM396 396h4v4h-4zM296 400h4v4h-4zM336 400h4v4h-4zM392 400h4v4h-4zM396 400h4v4h-4zM400 400h4v4h-4zM404 400h4v4h-4zM408 400h4v4h-4zM296 404h4v4h-4zM300 404h4v4h-4zM308 404h4v4h-4zM412 404h4v4h-4zM288 408h4v4h-4zM296 408h4v4h-4zM308 408h4v4h-4zM312 408h4v4h-4zM352 408h4v4h-4zM356 408h4v4h-4zM292 412h4v4h-4zM296 412h4v4h-4zM300 412h4v4h-4zM308 412h4v4h-4zM380 412h4v4h-4zM296 416h4v4h-4zM300 416h4v4h-4zM372 416h4v4h-4zM292 420h4v4h-4zM328 420h4v4h-4zM336 420h4v4h-4zM280 424h4v4h-4zM288 424h4v4h-4zM332 424h4v4h-4zM336 424h4v4h-4zM348 424h4v4h-4zM368 424h4v4h-4zM372 424h4v4h-4zM376 424h4v4h-4zM284 428h4v4h-4zM332 428h4v4h-4zM340 428h4v4h-4zM372 428h4v4h-4zM376 428h4v4h-4zM396 428h4v4h-4zM280 432h4v4h-4zM288 432h4v4h-4zM336 432h4v4h-4zM340 432h4v4h-4zM348 432h4v4h-4zM276 436h4v4h-4zM280 436h4v4h-4zM392 436h4v4h-4zM304 440h4v4h-4zM320 440h4v4h-4zM344 440h4v4h-4zM392 440h4v4h-4zM344 444h4v4h-4zM348 444h4v4h-4zM352 444h4v4h-4zM296 448h4v4h-4zM316 448h4v4h-4zM344 448h4v4h-4zM328 456h4v4h-4zM332 456h4v4h-4zM364 456h4v4h-4zM320 460h4v4h-4zM368 460h4v4h-4zM296 464h4v4h-4zM360 464h4v4h-4zM368 464h4v4h-4zM308 468h4v4h-4zM316 468h4v4h-4zM320 468h4v4h-4zM352 468h4v4h-4zM356 468h4v4h-4zM372 468h4v4h-4zM304 472h4v4h-4zM308 472h4v4h-4zM312 472h4v4h-4zM316 472h4v4h-4zM320 472h4v4h-4zM324 472h4v4h-4zM336 472h4v4h-4zM352 472h4v4h-4zM372 472h4v4h-4zM376 472h4v4h-4zM312 476h4v4h-4zM352 476h4v4h-4zM368 480h4v4h-4zM332 488h4v4h-4zM336 488h4v4h-4z"/>
<path fill="#f89a16" d="M320 360h4v4h-4zM364 360h4v4h-4zM344 364h4v4h-4zM352 364h4v4h-4zM364 364h4v4h-4zM368 364h4v4h-4zM312 368h4v4h-4zM320 368h4v4h-4zM332 368h4v4h-4zM336 368h4v4h-4zM340 368h4v4h-4zM344 368h4v4h-4zM348 368h4v4h-4zM352 368h4v4h-4zM336 372h4v4h-4zM352 372h4v4h-4zM372 372h4v4h-4zM304 376h4v4h-4zM308 376h4v4h-4zM356 376h4v4h-4zM360 376h4v4h-4zM376 376h4v4h-4zM380 376h4v4h-4zM332 380h4v4h-4zM336 380h4v4h-4zM340 380h4v4h-4zM344 380h4v4h-4zM348 380h4v4h-4zM376 380h4v4h-4zM384 380h4v4h-4zM292 384h4v4h-4zM296 384h4v4h-4zM320 384h4v4h-4zM336 384h4v4h-4zM380 384h4v4h-4zM384 384h4v4h-4zM296 388h4v4h-4zM300 388h4v4h-4zM316 388h4v4h-4zM340 388h4v4h-4zM376 388h4v4h-4zM384 388h4v4h-4zM388 388h4v4h-4zM300 392h4v4h-4zM356 392h4v4h-4zM380 392h4v4h-4zM300 396h4v4h-4zM320 396h4v4h-4zM344 396h4v4h-4zM348 396h4v4h-4zM364 396h4v4h-4zM368 396h4v4h-4zM372 396h4v4h-4zM380 396h4v4h-4zM388 396h4v4h-4zM300 400h4v4h-4zM308 400h4v4h-4zM324 400h4v4h-4zM328 400h4v4h-4zM356 400h4v4h-4zM360 400h4v4h-4zM372 400h4v4h-4zM376 400h4v4h-4zM412 400h4v4h-4zM292 404h4v4h-4zM304 404h4v4h-4zM312 404h4v4h-4zM328 404h4v4h-4zM336 404h4v4h-4zM348 404h4v4h-4zM396 404h4v4h-4zM336 408h4v4h-4zM340 408h4v4h-4zM360 408h4v4h-4zM388 408h4v4h-4zM396 408h4v4h-4zM312 412h4v4h-4zM316 412h4v4h-4zM320 412h4v4h-4zM332 412h4v4h-4zM340 412h4v4h-4zM360 412h4v4h-4zM292 416h4v4h-4zM320 416h4v4h-4zM336 416h4v4h-4zM356 416h4v4h-4zM284 420h4v4h-4zM296 420h4v4h-4zM300 420h4v4h-4zM304 420h4v4h-4zM308 420h4v4h-4zM312 420h4v4h-4zM316 420h4v4h-4zM320 420h4v4h-4zM348 420h4v4h-4zM352 420h4v4h-4zM356 420h4v4h-4zM392 420h4v4h-4zM404 420h4v4h-4zM408 420h4v4h-4zM284 424h4v4h-4zM308 424h4v4h-4zM360 424h4v4h-4zM404 424h4v4h-4zM412 424h4v4h-4zM276 428h4v4h-4zM288 428h4v4h-4zM300 428h4v4h-4zM304 428h4v4h-4zM316 428h4v4h-4zM272 432h4v4h-4zM292 432h4v4h-4zM328 432h4v4h-4zM332 432h4v4h-4zM392 432h4v4h-4zM292 436h4v4h-4zM308 436h4v4h-4zM312 436h4v4h-4zM320 436h4v4h-4zM340 436h4v4h-4zM344 436h4v4h-4zM356 436h4v4h-4zM364 436h4v4h-4zM368 436h4v4h-4zM376 436h4v4h-4zM408 436h4v4h-4zM276 440h4v4h-4zM284 440h4v4h-4zM292 440h4v4h-4zM300 440h4v4h-4zM348 440h4v4h-4zM368 440h4v4h-4zM372 440h4v4h-4zM380 440h4v4h-4zM388 440h4v4h-4zM276 444h4v4h-4zM288 444h4v4h-4zM296 444h4v4h-4zM300 444h4v4h-4zM304 444h4v4h-4zM308 444h4v4h-4zM320 444h4v4h-4zM328 444h4v4h-4zM336 444h4v4h-4zM388 444h4v4h-4zM396 444h4v4h-4zM284 448h4v4h-4zM336 448h4v4h-4zM392 448h4v4h-4zM288 452h4v4h-4zM292 452h4v4h-4zM312 452h4v4h-4zM316 452h4v4h-4zM336 452h4v4h-4zM352 452h4v4h-4zM356 452h4v4h-4zM360 452h4v4h-4zM376 452h4v4h-4zM288 456h4v4h-4zM304 456h4v4h-4zM312 456h4v4h-4zM340 456h4v4h-4zM348 456h4v4h-4zM352 456h4v4h-4zM356 456h4v4h-4zM368 456h4v4h-4zM376 456h4v4h-4zM380 456h4v4h-4zM292 460h4v4h-4zM296 460h4v4h-4zM308 460h4v4h-4zM316 460h4v4h-4zM328 460h4v4h-4zM336 460h4v4h-4zM344 460h4v4h-4zM348 460h4v4h-4zM364 460h4v4h-4zM372 460h4v4h-4zM376 460h4v4h-4zM380 460h4v4h-4zM384 460h4v4h-4zM300 464h4v4h-4zM312 464h4v4h-4zM320 464h4v4h-4zM340 464h4v4h-4zM356 464h4v4h-4zM296 468h4v4h-4zM300 468h4v4h-4zM340 468h4v4h-4zM344 468h4v4h-4zM348 468h4v4h-4zM348 472h4v4h-4zM368 472h4v4h-4zM384 472h4v4h-4zM324 476h4v4h-4zM340 476h4v4h-4zM364 476h4v4h-4zM376 476h4v4h-4zM332 480h4v4h-4zM348 480h4v4h-4zM360 480h4v4h-4zM340 484h4v4h-4zM348 484h4v4h-4zM352 484h4v4h-4zM364 484h4v4h-4zM368 484h4v4h-4zM340 492h4v4h-4z"/>
<path fill="#fcc428" d="M324 360h4v4h-4zM368 360h4v4h-4zM376 364h4v4h-4zM324 368h4v4h-4zM376 368h4v4h-4zM320 372h4v4h-4zM348 372h4v4h-4zM356 372h4v4h-4zM376 372h4v4h-4zM380 372h4v4h-4zM300 376h4v4h-4zM324 376h4v4h-4zM332 376h4v4h-4zM368 376h4v4h-4zM292 380h4v4h-4zM296 380h4v4h-4zM300 380h4v4h-4zM316 380h4v4h-4zM324 380h4v4h-4zM328 380h4v4h-4zM372 380h4v4h-4zM288 384h4v4h-4zM340 384h4v4h-4zM348 384h4v4h-4zM356 384h4v4h-4zM364 384h4v4h-4zM372 384h4v4h-4zM288 388h4v4h-4zM320 388h4v4h-4zM352 388h4v4h-4zM364 388h4v4h-4zM368 388h4v4h-4zM324 392h4v4h-4zM328 392h4v4h-4zM352 392h4v4h-4zM360 392h4v4h-4zM288 396h4v4h-4zM304 396h4v4h-4zM324 396h4v4h-4zM356 396h4v4h-4zM344 400h4v4h-4zM364 400h4v4h-4zM324 404h4v4h-4zM332 404h4v4h-4zM340 404h4v4h-4zM360 404h4v4h-4zM364 404h4v4h-4zM368 404h4v4h-4zM316 408h4v4h-4zM344 408h4v4h-4zM364 408h4v4h-4zM392 408h4v4h-4zM404 408h4v4h-4zM324 412h4v4h-4zM336 412h4v4h-4zM344 412h4v4h-4zM356 412h4v4h-4zM400 412h4v4h-4zM408 412h4v4h-4zM312 416h4v4h-4zM316 416h4v4h-4zM364 416h4v4h-4zM412 416h4v4h-4zM344 420h4v4h-4zM360 420h4v4h-4zM276 424h4v4h-4zM316 424h4v4h-4zM352 424h4v4h-4zM356 424h4v4h-4zM364 424h4v4h-4zM308 428h4v4h-4zM312 428h4v4h-4zM352 428h4v4h-4zM356 428h4v4h-4zM360 428h4v4h-4zM404 428h4v4h-4zM408 428h4v4h-4zM296 432h4v4h-4zM308 432h4v4h-4zM320 432h4v4h-4zM316 436h4v4h-4zM324 436h4v4h-4zM332 436h4v4h-4zM380 436h4v4h-4zM308 440h4v4h-4zM312 440h4v4h-4zM332 440h4v4h-4zM340 440h4v4h-4zM360 440h4v4h-4zM280 444h4v4h-4zM292 444h4v4h-4zM368 444h4v4h-4zM376 444h4v4h-4zM380 444h4v4h-4zM392 444h4v4h-4zM280 448h4v4h-4zM300 448h4v4h-4zM308 448h4v4h-4zM364 448h4v4h-4zM372 448h4v4h-4zM372 452h4v4h-4zM380 452h4v4h-4zM308 456h4v4h-4zM392 456h4v4h-4zM304 460h4v4h-4zM332 460h4v4h-4zM356 460h4v4h-4zM328 464h4v4h-4zM336 464h4v4h-4zM348 464h4v4h-4zM376 464h4v4h-4zM388 464h4v4h-4zM328 468h4v4h-4zM360 468h4v4h-4zM384 468h4v4h-4zM336 476h4v4h-4zM344 476h4v4h-4zM356 476h4v4h-4zM360 476h4v4h-4zM340 480h4v4h-4zM344 480h4v4h-4zM352 480h4v4h-4zM356 480h4v4h-4zM344 484h4v4h-4zM356 484h4v4h-4zM372 484h4v4h-4zM348 488h4v4h-4zM344 492h4v4h-4z"/>
<path fill="#fcec40" d="M344 360h4v4h-4zM320 364h4v4h-4zM348 364h4v4h-4zM316 368h4v4h-4zM368 368h4v4h-4zM372 368h4v4h-4zM368 372h4v4h-4zM320 376h4v4h-4zM352 376h4v4h-4zM372 376h4v4h-4zM320 380h4v4h-4zM352 380h4v4h-4zM356 380h4v4h-4zM360 380h4v4h-4zM368 380h4v4h-4zM380 380h4v4h-4zM324 384h4v4h-4zM328 384h4v4h-4zM332 384h4v4h-4zM344 384h4v4h-4zM352 384h4v4h-4zM360 384h4v4h-4zM368 384h4v4h-4zM328 388h4v4h-4zM348 388h4v4h-4zM356 388h4v4h-4zM292 392h4v4h-4zM296 392h4v4h-4zM320 400h4v4h-4zM368 400h4v4h-4zM320 404h4v4h-4zM344 404h4v4h-4zM372 404h4v4h-4zM320 408h4v4h-4zM324 408h4v4h-4zM328 408h4v4h-4zM332 408h4v4h-4zM368 408h4v4h-4zM408 408h4v4h-4zM364 412h4v4h-4zM392 412h4v4h-4zM396 412h4v4h-4zM404 412h4v4h-4zM340 416h4v4h-4zM344 416h4v4h-4zM360 416h4v4h-4zM388 416h4v4h-4zM392 416h4v4h-4zM396 416h4v4h-4zM412 420h4v4h-4zM296 424h4v4h-4zM300 424h4v4h-4zM304 424h4v4h-4zM320 424h4v4h-4zM408 424h4v4h-4zM296 428h4v4h-4zM320 428h4v4h-4zM412 428h4v4h-4zM312 432h4v4h-4zM316 432h4v4h-4zM324 432h4v4h-4zM408 432h4v4h-4zM412 432h4v4h-4zM336 440h4v4h-4zM376 440h4v4h-4zM384 440h4v4h-4zM284 444h4v4h-4zM360 444h4v4h-4zM384 444h4v4h-4zM288 448h4v4h-4zM304 448h4v4h-4zM360 448h4v4h-4zM384 448h4v4h-4zM388 448h4v4h-4zM396 448h4v4h-4zM304 452h4v4h-4zM308 452h4v4h-4zM312 460h4v4h-4zM352 460h4v4h-4zM308 464h4v4h-4zM380 464h4v4h-4zM384 464h4v4h-4zM380 468h4v4h-4zM340 472h4v4h-4zM344 472h4v4h-4zM320 480h4v4h-4zM324 480h4v4h-4zM328 480h4v4h-4zM360 484h4v4h-4z"/>
</g></g>
<g clip-path="url(#pc)"><g filter="url(#bl2)">
<circle cx="436.5" cy="316.5" r="29.5" fill="#d8b030"/>
<path fill="#886828" d="M424 286h3v3h-3zM436 286h3v3h-3zM439 286h3v3h-3zM445 286h3v3h-3zM424 289h3v3h-3zM427 289h3v3h-3zM445 289h3v3h-3zM451 289h3v3h-3zM451 292h3v3h-3zM454 292h3v3h-3zM454 295h3v3h-3zM409 298h3v3h-3zM406 307h3v3h-3zM409 307h3v3h-3zM406 310h3v3h-3zM463 310h3v3h-3zM466 310h3v3h-3zM406 313h3v3h-3zM463 313h3v3h-3zM466 319h3v3h-3zM406 325h3v3h-3zM409 328h3v3h-3zM412 331h3v3h-3zM415 334h3v3h-3zM421 340h3v3h-3zM454 340h3v3h-3zM421 343h3v3h-3zM430 343h3v3h-3zM436 343h3v3h-3zM436 346h3v3h-3z"/>
<path fill="#b09040" d="M427 286h3v3h-3zM433 286h3v3h-3zM448 289h3v3h-3zM415 295h3v3h-3zM457 295h3v3h-3zM460 301h3v3h-3zM406 304h3v3h-3zM466 313h3v3h-3zM406 316h3v3h-3zM466 316h3v3h-3zM406 319h3v3h-3zM406 322h3v3h-3zM463 322h3v3h-3zM460 328h3v3h-3zM463 328h3v3h-3zM412 334h3v3h-3zM457 334h3v3h-3zM415 337h3v3h-3zM457 337h3v3h-3zM418 340h3v3h-3zM448 340h3v3h-3zM451 340h3v3h-3zM439 343h3v3h-3zM445 343h3v3h-3zM448 343h3v3h-3z"/>
<path fill="#a08030" d="M430 286h3v3h-3zM442 286h3v3h-3zM418 289h3v3h-3zM421 289h3v3h-3zM415 292h3v3h-3zM418 292h3v3h-3zM412 295h3v3h-3zM412 298h3v3h-3zM457 298h3v3h-3zM460 298h3v3h-3zM409 301h3v3h-3zM463 301h3v3h-3zM409 304h3v3h-3zM460 304h3v3h-3zM463 304h3v3h-3zM463 307h3v3h-3zM463 316h3v3h-3zM463 319h3v3h-3zM409 325h3v3h-3zM463 325h3v3h-3zM409 331h3v3h-3zM457 331h3v3h-3zM460 331h3v3h-3zM460 334h3v3h-3zM418 337h3v3h-3zM451 337h3v3h-3zM454 337h3v3h-3zM424 340h3v3h-3zM424 343h3v3h-3zM427 343h3v3h-3zM433 343h3v3h-3zM442 343h3v3h-3zM430 346h3v3h-3zM433 346h3v3h-3zM439 346h3v3h-3z"/>
<path fill="#f0dc80" d="M430 289h3v3h-3zM424 292h3v3h-3zM445 292h3v3h-3zM445 295h3v3h-3zM451 295h3v3h-3zM421 298h3v3h-3zM442 298h3v3h-3zM451 298h3v3h-3zM412 301h3v3h-3zM448 301h3v3h-3zM412 304h3v3h-3zM415 307h3v3h-3zM418 307h3v3h-3zM439 307h3v3h-3zM409 310h3v3h-3zM433 310h3v3h-3zM439 310h3v3h-3zM454 310h3v3h-3zM433 313h3v3h-3zM445 313h3v3h-3zM448 313h3v3h-3zM439 316h3v3h-3zM409 319h3v3h-3zM412 319h3v3h-3zM451 319h3v3h-3zM427 322h3v3h-3zM412 325h3v3h-3zM421 325h3v3h-3zM454 325h3v3h-3zM418 328h3v3h-3zM451 328h3v3h-3zM454 328h3v3h-3zM418 331h3v3h-3zM421 337h3v3h-3zM442 337h3v3h-3zM448 337h3v3h-3zM427 340h3v3h-3zM442 340h3v3h-3zM445 340h3v3h-3z"/>
<path fill="#d8b034" d="M433 289h3v3h-3zM436 289h3v3h-3zM433 292h3v3h-3zM442 292h3v3h-3zM424 295h3v3h-3zM427 295h3v3h-3zM433 295h3v3h-3zM415 298h3v3h-3zM418 298h3v3h-3zM424 298h3v3h-3zM436 298h3v3h-3zM454 298h3v3h-3zM421 301h3v3h-3zM424 301h3v3h-3zM427 301h3v3h-3zM433 301h3v3h-3zM445 301h3v3h-3zM454 301h3v3h-3zM457 301h3v3h-3zM424 304h3v3h-3zM439 304h3v3h-3zM442 304h3v3h-3zM448 304h3v3h-3zM454 304h3v3h-3zM412 307h3v3h-3zM421 307h3v3h-3zM433 307h3v3h-3zM436 307h3v3h-3zM448 307h3v3h-3zM424 310h3v3h-3zM430 310h3v3h-3zM448 310h3v3h-3zM451 310h3v3h-3zM415 313h3v3h-3zM418 313h3v3h-3zM421 313h3v3h-3zM427 313h3v3h-3zM460 313h3v3h-3zM409 316h3v3h-3zM421 316h3v3h-3zM427 316h3v3h-3zM460 316h3v3h-3zM415 319h3v3h-3zM418 319h3v3h-3zM427 319h3v3h-3zM454 319h3v3h-3zM460 319h3v3h-3zM409 322h3v3h-3zM412 322h3v3h-3zM418 322h3v3h-3zM430 322h3v3h-3zM451 322h3v3h-3zM460 322h3v3h-3zM415 325h3v3h-3zM418 325h3v3h-3zM424 325h3v3h-3zM412 328h3v3h-3zM424 328h3v3h-3zM430 328h3v3h-3zM442 328h3v3h-3zM457 328h3v3h-3zM430 331h3v3h-3zM454 331h3v3h-3zM421 334h3v3h-3zM427 334h3v3h-3zM430 334h3v3h-3zM433 334h3v3h-3zM445 334h3v3h-3zM430 337h3v3h-3zM445 337h3v3h-3z"/>
<path fill="#e8c850" d="M439 289h3v3h-3zM442 289h3v3h-3zM421 292h3v3h-3zM427 292h3v3h-3zM430 292h3v3h-3zM439 292h3v3h-3zM448 292h3v3h-3zM418 295h3v3h-3zM421 295h3v3h-3zM430 295h3v3h-3zM436 295h3v3h-3zM439 295h3v3h-3zM442 295h3v3h-3zM448 295h3v3h-3zM427 298h3v3h-3zM430 298h3v3h-3zM433 298h3v3h-3zM439 298h3v3h-3zM445 298h3v3h-3zM448 298h3v3h-3zM415 301h3v3h-3zM418 301h3v3h-3zM430 301h3v3h-3zM439 301h3v3h-3zM442 301h3v3h-3zM451 301h3v3h-3zM415 304h3v3h-3zM418 304h3v3h-3zM427 304h3v3h-3zM430 304h3v3h-3zM433 304h3v3h-3zM436 304h3v3h-3zM445 304h3v3h-3zM451 304h3v3h-3zM424 307h3v3h-3zM442 307h3v3h-3zM454 307h3v3h-3zM412 310h3v3h-3zM415 310h3v3h-3zM421 310h3v3h-3zM427 310h3v3h-3zM436 310h3v3h-3zM442 310h3v3h-3zM457 310h3v3h-3zM460 310h3v3h-3zM409 313h3v3h-3zM412 313h3v3h-3zM424 313h3v3h-3zM430 313h3v3h-3zM451 313h3v3h-3zM454 313h3v3h-3zM412 316h3v3h-3zM415 316h3v3h-3zM418 316h3v3h-3zM424 316h3v3h-3zM430 316h3v3h-3zM433 316h3v3h-3zM436 316h3v3h-3zM445 316h3v3h-3zM448 316h3v3h-3zM421 319h3v3h-3zM424 319h3v3h-3zM436 319h3v3h-3zM448 319h3v3h-3zM415 322h3v3h-3zM421 322h3v3h-3zM424 322h3v3h-3zM448 322h3v3h-3zM454 322h3v3h-3zM457 322h3v3h-3zM436 325h3v3h-3zM457 325h3v3h-3zM415 328h3v3h-3zM421 328h3v3h-3zM415 331h3v3h-3zM421 331h3v3h-3zM424 331h3v3h-3zM418 334h3v3h-3zM424 334h3v3h-3zM454 334h3v3h-3zM424 337h3v3h-3zM436 337h3v3h-3zM433 340h3v3h-3zM436 340h3v3h-3zM439 340h3v3h-3z"/>
<path fill="#c09830" d="M436 292h3v3h-3zM436 301h3v3h-3zM421 304h3v3h-3zM427 307h3v3h-3zM430 307h3v3h-3zM445 307h3v3h-3zM451 307h3v3h-3zM460 307h3v3h-3zM418 310h3v3h-3zM445 310h3v3h-3zM433 319h3v3h-3zM460 325h3v3h-3zM427 331h3v3h-3zM451 334h3v3h-3zM427 337h3v3h-3zM430 340h3v3h-3z"/>
<path fill="#e0dcc0" d="M457 304h3v3h-3zM457 307h3v3h-3zM457 313h3v3h-3zM457 316h3v3h-3zM457 319h3v3h-3z"/>
<path fill="#d4ccb0" d="M436 313h3v3h-3zM439 313h3v3h-3zM442 313h3v3h-3zM451 316h3v3h-3zM454 316h3v3h-3z"/>
<path fill="#e89040" d="M442 316h3v3h-3zM430 319h3v3h-3zM442 322h3v3h-3zM427 325h3v3h-3zM430 325h3v3h-3zM451 325h3v3h-3zM427 328h3v3h-3zM448 331h3v3h-3zM451 331h3v3h-3zM436 334h3v3h-3zM448 334h3v3h-3zM433 337h3v3h-3zM439 337h3v3h-3z"/>
<path fill="#e06018" d="M439 319h3v3h-3zM445 319h3v3h-3zM436 322h3v3h-3zM439 322h3v3h-3zM445 322h3v3h-3zM439 325h3v3h-3zM448 325h3v3h-3zM445 328h3v3h-3zM448 328h3v3h-3zM433 331h3v3h-3zM445 331h3v3h-3zM442 334h3v3h-3z"/>
<path fill="#f08830" d="M442 319h3v3h-3zM442 325h3v3h-3zM433 328h3v3h-3zM436 331h3v3h-3zM439 331h3v3h-3zM439 334h3v3h-3z"/>
<path fill="#f07020" d="M433 322h3v3h-3zM433 325h3v3h-3zM445 325h3v3h-3zM436 328h3v3h-3zM439 328h3v3h-3zM442 331h3v3h-3z"/>
</g>
<rect x="438" y="323" width="5" height="4" fill="#383818" opacity="0.85" filter="url(#bl2)"/>
<rect x="429" y="332" width="5" height="4" fill="#383818" opacity="0.85" filter="url(#bl2)"/>
<rect x="433" y="304" width="3" height="2" fill="#404020" opacity="0.8"/>
</g>
</svg></div>
<div class="a" style="left:240px;top:535px;width:528px;height:33px;border:1px solid #fbfbfd;border-radius:4px"></div>
<div class="a" style="left:239px;top:534px;width:528px;height:33px;border:1px solid #c4c2ca;border-radius:4px"></div>
<div class="t" style="right:453px;top:545px;letter-spacing:-0.3px">r [mln km]:</div>
<div class="a" style="left:335px;top:541px;width:67px;height:21px;background:#e4e3e8;border:1px solid #a8a8b0"></div>
<div class="t" style="right:379px;top:545px;">99,519</div>
<div class="t" style="right:264px;top:545px;">v [km/s]:</div>
<div class="a" style="left:519px;top:541px;width:67px;height:21px;background:#e4e3e8;border:1px solid #a8a8b0"></div>
<div class="t" style="right:195px;top:545px;">16,563</div>
<div class="t" style="right:98px;top:545px;">t [lata]:</div>
<div class="a" style="left:687px;top:541px;width:67px;height:21px;background:#e4e3e8;border:1px solid #a8a8b0"></div>
<div class="t" style="right:27px;top:545px;">0,000</div>
</body></html>
